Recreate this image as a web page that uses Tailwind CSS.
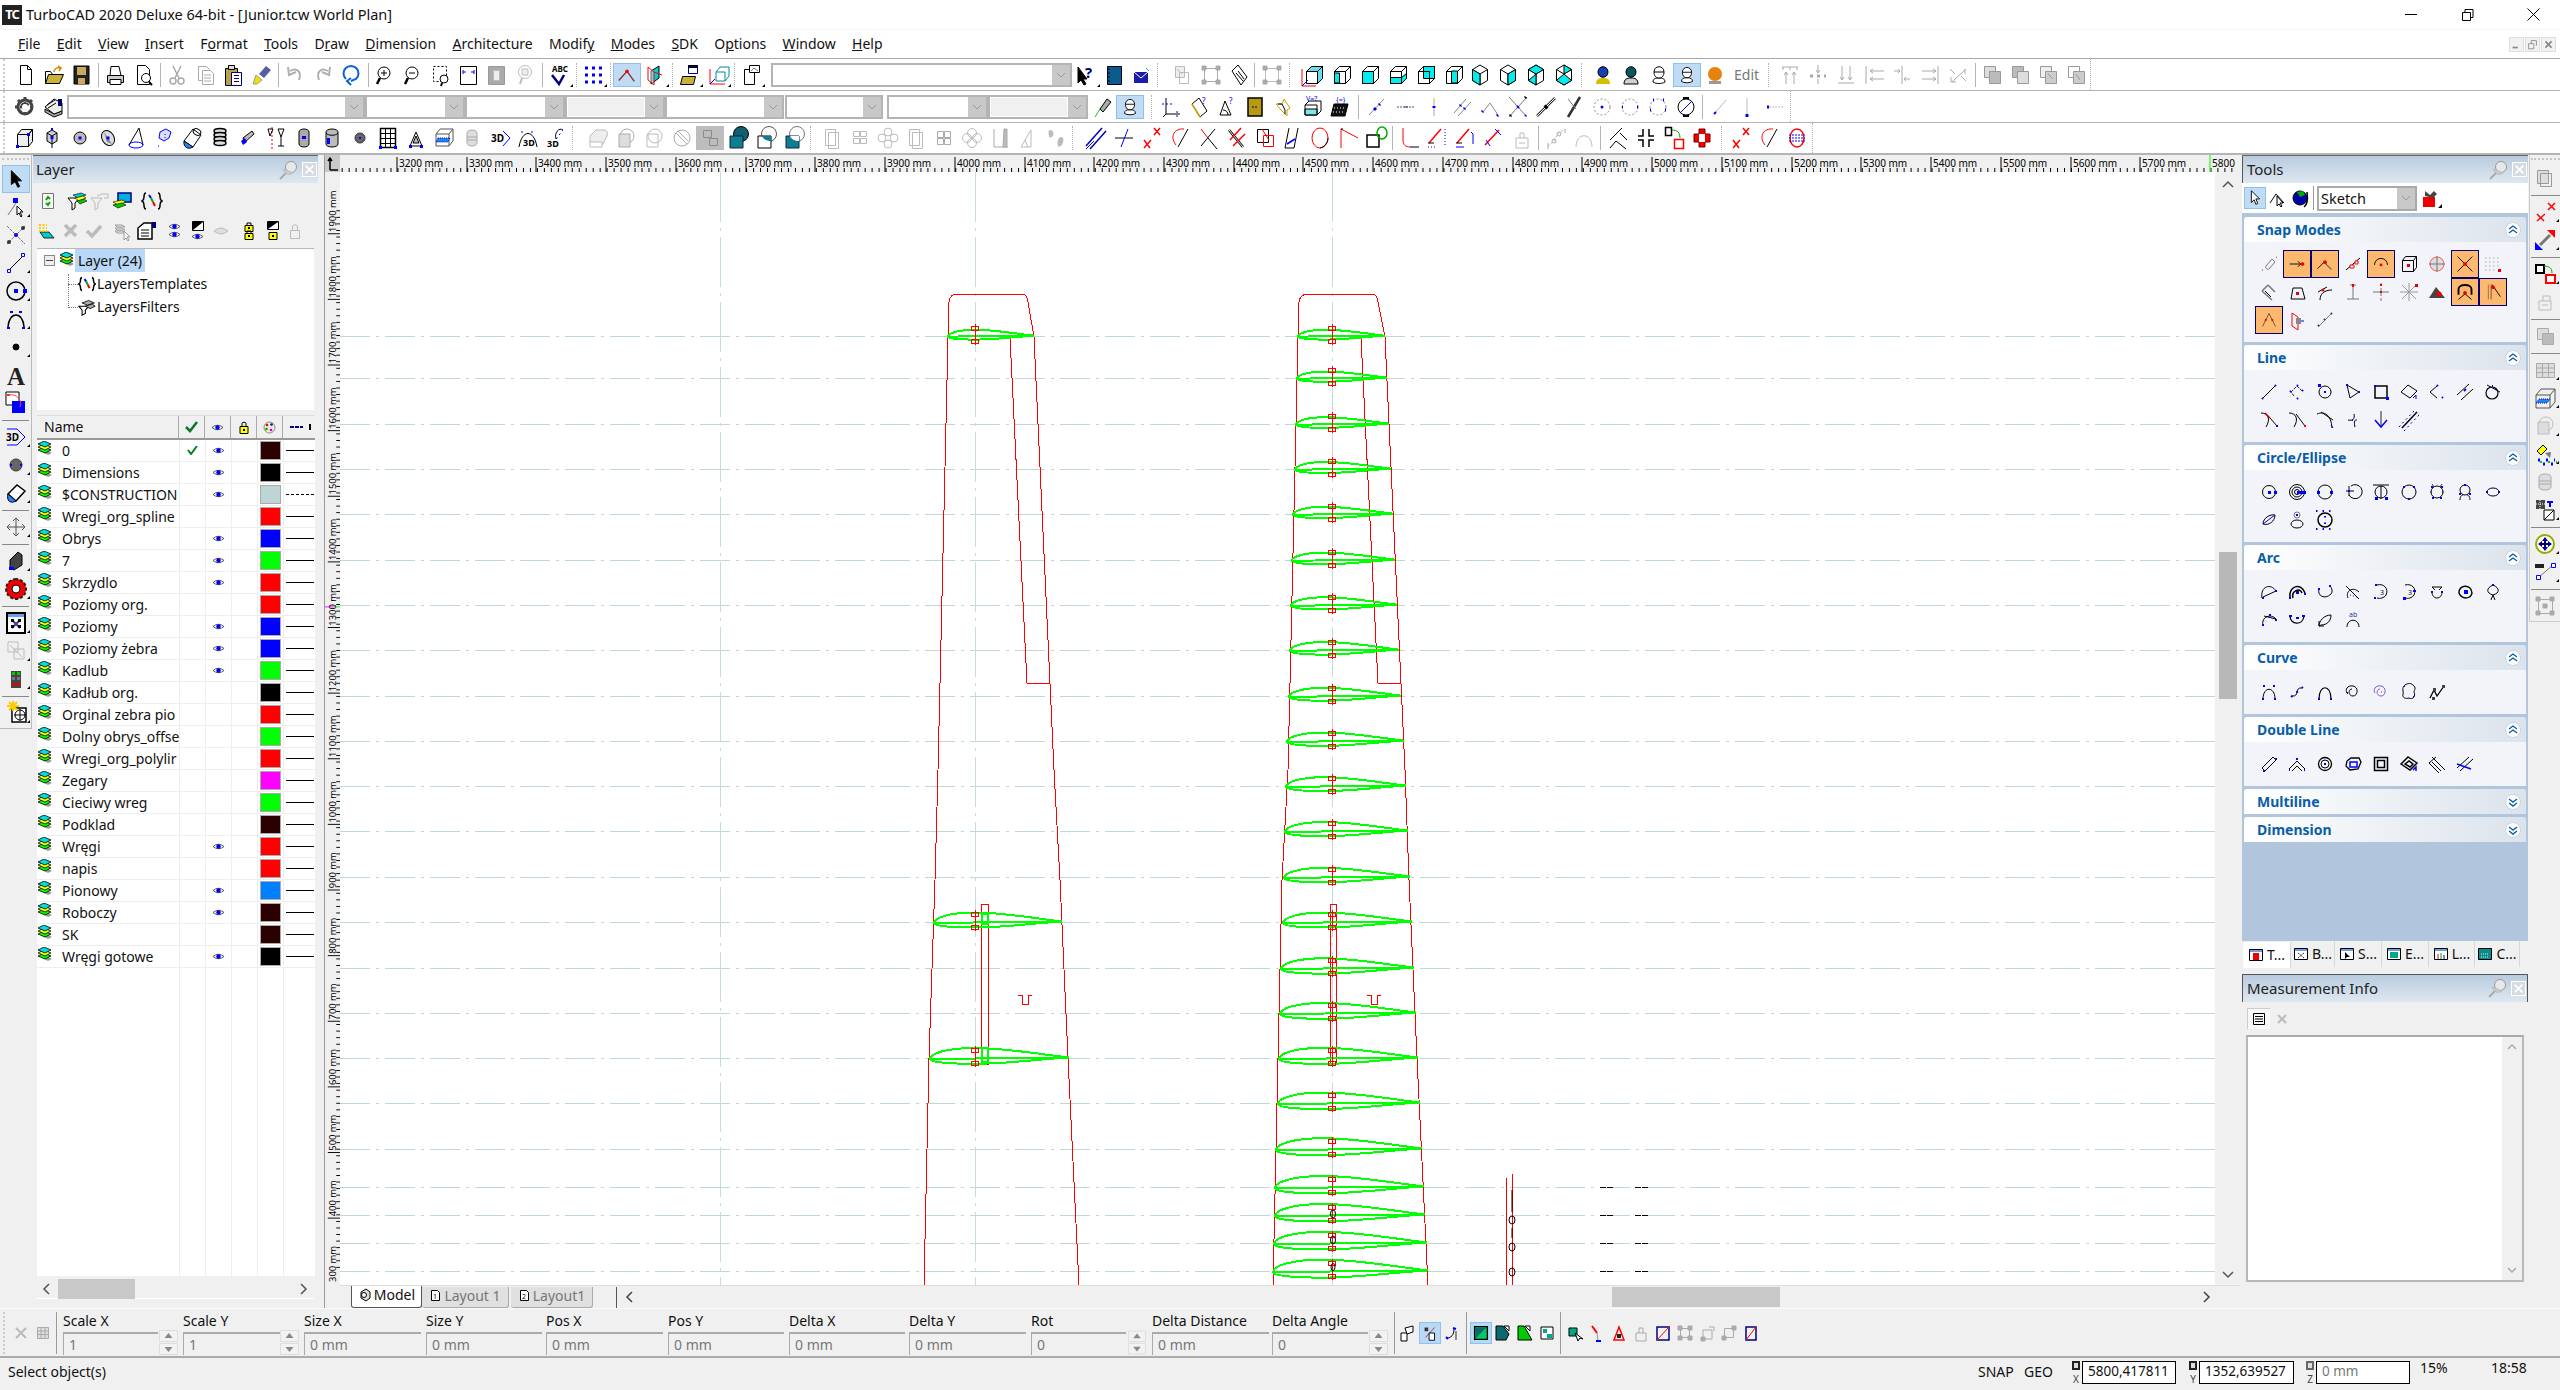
<!DOCTYPE html>
<html lang="en">
<head>
<meta charset="UTF-8" />
<title>TurboCAD 2020 Deluxe 64-bit - [Junior.tcw World Plan]</title>
<script src="https://cdn.jsdelivr.net/npm/@tailwindcss/browser@4"></script>
</head>
<body class="w-[2560px] h-[1390px] overflow-hidden bg-[#f0f0f0] text-[14px] leading-none text-[#111] font-['Noto_Sans',sans-serif] flex flex-col fill-none stroke-black">

<svg class="absolute size-0">
  <defs>
    <g id="stk" stroke="#000" stroke-width=".8"><path fill="#999" stroke="none" d="M3 10l7 4 4-2-7-4z"/><path fill="#0f0" d="M0 9l6-3 7 3-6 3z"/><path fill="#ff0" d="M0 6l6-3 7 3-6 3z"/><path fill="#0dd" d="M0 3l6-3 7 3-6 3z"/></g>
    <g id="eye"><path fill="#fff" stroke="#555" d="M1 4.500q5.500-4.500 11 0q-5.500 4.500-11 0z"/><circle cx="6.500" cy="4.500" r="2.200" fill="#00f" stroke="none"/></g>
    <g id="mag"><circle cx="13" cy="10" r="6" fill="#fff"/><path stroke-width="2.500" d="M9 15l-3 6"/></g>
    <g id="cube"><path fill="#fff" d="M8.500 8.500h11v12h-11zM8.500 8.500l5-5h11l-5 5zM19.500 8.500l5-5v12l-5 5z"/></g>
    <g id="hex"><path fill="#fff" d="M14 2l7.500 4.500v11L14 22l-7.500-4.500v-11z"/><path d="M6.500 6.500L14 11l7.500-4.500M14 11v11"/></g>
    <g id="hd"><path fill="#fff" d="M8 19c0-3 2-4 6-4s6 1 6 4c-3 2-9 2-12 0z"/><path fill="#fff" d="M9 9c0-7 10-7 10 0 0 4-2 6-5 6s-5-2-5-6z"/><path d="M9 9h10"/></g>
    <g id="tri"><path fill="#000" stroke="none" d="M25 24h3v-3z"/></g>
    <g id="foil"><path vector-effect="non-scaling-stroke" d="M0 .1C0-.45.12-1 .32-1C.55-1 .8-.35 1-.05C.75.15.55.58.32.58C.12.58 0 .4 0 .1ZM0 .1L1-.05"/></g>
    <g id="sp" stroke="#f00"><path d="M-3.500-9.500h7v4h-7zM-3.500 3.500h7v4h-7zM0-12V9"/></g>
    <g id="dz"><circle cx="8" cy="8" r="7.500" fill="#fff" stroke="#c9d3de"/><path d="M4 7l4-3 4 3M4 11l4-3 4 3" stroke="#0a5ea8" stroke-width="1.400"/></g>
    <g id="dn"><circle cx="8" cy="8" r="7.500" fill="#fff" stroke="#c9d3de"/><path d="M4 5l4 3 4-3M4 9l4 3 4-3" stroke="#0a5ea8" stroke-width="1.400"/></g>
    <g id="pin"><circle cx="13" cy="7" r="5.500" fill="#e8e8e8" stroke="#999"/><path d="M8 13l-6 6" stroke="#aaa" stroke-width="2"/><path fill="#ccc" stroke="#bbb" d="M5 9q4 8 10 4z"/></g>
    <g id="dd"><path stroke="#999" d="M1 1l4 4 4-4"/></g>
    <pattern id="rt" width="6.973" height="4" patternUnits="userSpaceOnUse"><path stroke="#000" d="M.5 0v4"/></pattern>
    <pattern id="rv" width="4" height="7" patternUnits="userSpaceOnUse"><path stroke="#000" d="M0 .5h4"/></pattern>
  </defs>
</svg>

<!-- title bar -->
<header class="h-[29px] bg-white flex items-center shrink-0">
  <span class="ml-[2px] w-[20px] h-[20px] bg-[#222] text-white text-[13px] font-bold flex items-center justify-center tracking-[-1px]">TC</span>
  <span class="ml-[4px] text-[14.500px]">TurboCAD 2020 Deluxe 64-bit - [Junior.tcw World Plan]</span>
  <div class="ml-auto flex items-center pr-[20px]">
    <i class="w-[12px] h-[1.500px] bg-black"></i>
    <svg class="ml-[45px] w-[12px] h-[12px]" viewBox="0 0 12 12"><path d="M.5 3.500h8v8h-8zM3 3.500V.5h8v8H8.500"/></svg>
    <svg class="ml-[53px] w-[13px] h-[13px]" viewBox="0 0 13 13"><path d="M.5.5l12 12M12.500.5l-12 12"/></svg>
  </div>
</header>

<!-- menu -->
<nav class="h-[30px] bg-white border-b border-t border-t-[#f4f4f4] border-b-[#a8a8a8] flex items-center shrink-0 pl-[18px]">
  <span class="flex gap-[16.300px] text-[14px]">
    <span><u>F</u>ile</span><span><u>E</u>dit</span><span><u>V</u>iew</span><span><u>I</u>nsert</span><span>F<u>o</u>rmat</span><span><u>T</u>ools</span><span>D<u>r</u>aw</span><span><u>D</u>imension</span><span><u>A</u>rchitecture</span><span>Modif<u>y</u></span><span><u>M</u>odes</span><span><u>S</u>DK</span><span>O<u>p</u>tions</span><span><u>W</u>indow</span><span><u>H</u>elp</span>
  </span>
  <div class="ml-auto flex gap-px pr-[4px] [&>svg]:w-[15px] [&>svg]:h-[15px] [&>svg]:bg-[#f2f2f2] [&>svg]:border [&>svg]:border-[#ddd]">
    <svg viewBox="0 0 15 15"><path stroke="#888" stroke-width="2" d="M3 11h6"/></svg>
    <svg viewBox="0 0 15 15"><path stroke="#888" d="M3 6.500h6v6H3zM6 6V3h6v6"/></svg>
    <svg viewBox="0 0 15 15"><path stroke="#888" stroke-width="2" d="M4 4l7 7M11 4l-7 7"/></svg>
  </div>
</nav>

<!-- toolbar 1 -->
<div class="h-[32px] bg-white border-b border-[#b4b4b4] shrink-0 flex items-center">
  <div class="flex items-center ml-[3px] pl-[6px] h-full w-[2088px] border-l-2 border-l-[#ccc] border-dotted border-r border-r-[#b4b4b4] [&>*]:shrink-0 [&>svg]:w-[28px] [&>svg]:h-[24px] [&>i]:w-[6px] [&>i]:h-[24px] [&>i]:border-l [&>i]:border-[#b4b4b4] [&>i]:ml-[3px] [&>i]:mr-[-3px]">
    <svg viewBox="0 0 28 24"><path fill="#fff" d="M9.500 2.500h7l4 4v15h-11zM16.500 2.500v4h4"/></svg>
    <svg viewBox="0 0 28 24"><path fill="#c9b23a" d="M6.500 20.500l3-9h15l-4 9z"/><path d="M6.500 20.500v-12h5l2 3"/><path stroke="#e08000" stroke-width="1.500" d="M15 9c0-3 3-5 6-4M19 3l3 2-2 3"/></svg>
    <svg viewBox="0 0 28 24"><path fill="#222" d="M7 3h15v18H7z"/><path fill="#cba95c" stroke="none" d="M10 4h9v8h-9zM11 15h7v6h-7z"/></svg>
    <i></i>
    <svg viewBox="0 0 28 24"><path fill="#ccc" d="M6.500 12.500h16v7h-16z"/><path fill="#fff" d="M10 3.500h8l2 9H9zM9 16.500h11v5H9z"/></svg>
    <svg viewBox="0 0 28 24"><path fill="#fff" d="M8.500 2.500h8l4 4v15h-12z"/><circle cx="17" cy="15" r="4.500" fill="#fff"/><path d="M20 19l3 3" stroke-width="2"/></svg>
    <i></i>
    <svg viewBox="0 0 28 24"><g stroke="#aaa" stroke-width="1.500"><path d="M10 3l6 12M18 3l-6 12"/><circle cx="10" cy="18" r="3"/><circle cx="18" cy="18" r="3"/></g></svg>
    <svg viewBox="0 0 28 24"><g stroke="#aaa"><path fill="#fff" d="M7.500 3.500h8l3 3v11h-11z"/><path fill="#fff" d="M11.500 7.500h8l3 3v11h-11z"/><path d="M13 12h7M13 15h7M13 18h7"/></g></svg>
    <svg viewBox="0 0 28 24"><path fill="#b9a24a" d="M6.500 5.500h12v17h-12z"/><path fill="#ddd" d="M9.500 2.500h6v4h-6z"/><path fill="#fff" stroke="#00007f" d="M12.500 9.500h10v13h-10z"/><path stroke="#00007f" d="M15 12.500h5M15 15.500h5M15 18.500h5"/></svg>
    <svg viewBox="0 0 28 24"><path fill="#f5e000" stroke="#999" d="M6 21l3-9 6 5-5 4z"/><path fill="#5560a0" stroke="none" d="M12 11l7-8 5 4-7 8z"/></svg>
    <i></i>
    <svg viewBox="0 0 28 24"><path stroke="#b0b0b0" stroke-width="2" d="M9 8c7-4 12 1 9 9M7 4l1 8 7-3"/></svg>
    <svg viewBox="0 0 28 24"><path stroke="#b0b0b0" stroke-width="2" d="M19 8c-7-4-12 1-9 9M21 4l-1 8-7-3"/></svg>
    <svg viewBox="0 0 28 24"><path stroke="#0a5fe0" stroke-width="2" d="M9 16a7.500 7.500 0 1 1 10 0l-5 2M14 22l-4-4 4-3"/></svg>
    <i></i>
    <svg viewBox="0 0 28 24"><use href="#mag"/><path d="M10 10h6M13 7v6"/></svg>
    <svg viewBox="0 0 28 24"><use href="#mag"/><path d="M10 10h6"/></svg>
    <svg viewBox="0 0 28 24"><path stroke-dasharray="2 2" d="M6.500 3.500h13v15h-13z"/><circle cx="17" cy="16" r="4" fill="#fff"/><path stroke-width="2" d="M15 20l-1 3"/></svg>
    <svg viewBox="0 0 28 24"><path fill="#fff" d="M5.500 3.500h16v18h-16z"/><path stroke="#00f" d="M8 9h3M16 9h3M8 7v4M19 7v4"/></svg>
    <svg viewBox="0 0 28 24"><path fill="#aaa" stroke="#999" d="M5.500 3.500h16v18h-16z"/><path fill="#eee" stroke="#bbb" d="M10.500 7.500h6v10h-6z"/></svg>
    <svg viewBox="0 0 28 24" stroke="#bbb"><circle cx="14" cy="9" r="6.500" fill="#fff"/><path fill="#eee" d="M11 6h6v6h-6z"/><path stroke-width="2" d="M11 15l-2 6"/></svg>
    <i></i>
    <svg viewBox="0 0 28 24"><text x="7" y="9" class="text-[8px] font-bold fill-black stroke-none">ABC</text><path stroke="#00007f" stroke-width="2.500" d="M7 12l7 9 5-9"/><use href="#tri"/></svg>
    <i class="border-dotted"></i>
    <svg viewBox="0 0 28 24"><path stroke="#00f" stroke-width="3" stroke-dasharray="3 4" d="M6 5h18M6 12h18M6 19h18"/><use href="#tri"/></svg>
    <i class="border-dotted"></i>
    <svg viewBox="0 0 28 24" class="bg-[#c0dcf5] border border-[#8fc1ea]"><path stroke="#8a3030" stroke-width="1.500" d="M5 18l9-10 8 11"/><circle cx="14" cy="8" r="2" fill="#f00" stroke="none"/></svg>
    <svg viewBox="0 0 28 24"><path fill="#0cc" d="M10 8l8-5v12l-8 6z"/><path stroke="#f00" fill="#fff" fill-opacity=".4" d="M7 4l6 5v13l-6-5z"/><path stroke="#f00" d="M13 9l8 3"/><use href="#tri"/></svg>
    <i class="border-dotted"></i>
    <svg viewBox="0 0 28 24"><path fill="#c9b23a" d="M5.500 21.500l2-8h13l-2 8z"/><path fill="#fff" stroke="#00007f" d="M13.500 2.500h9v8h-9z"/><path fill="#00007f" d="M13.500 2.500h9v2h-9z"/><use href="#tri"/></svg>
    <svg viewBox="0 0 28 24"><path stroke="#089" d="M13 9h9v9h-9zM13 9l4-5h9v9l-4 5"/><path stroke="#f00" d="M7 6v15h15"/><path stroke="#00f" d="M7 21l5-5"/><use href="#tri"/></svg>
    <i class="border-dotted"></i>
    <svg viewBox="0 0 28 24"><path fill="#fff" d="M7.500 6.500h10v15h-10z"/><path fill="#fff" d="M12.500 2.500h10v7h-10z"/><path stroke="#777" d="M14 8l3-3 4 3"/><use href="#tri"/></svg>
    <!-- style combo -->
    <div class="ml-[6px] w-[301px] h-[24px] bg-white border-2 border-[#b4b4b4] flex justify-end"><span class="w-[18px] bg-[#c8c8c8] flex items-center justify-center"><svg class="w-[10px] h-[6px]" viewBox="0 0 10 6"><use href="#dd"/></svg></span></div>
    <svg viewBox="0 0 28 24"><path fill="#000" d="M6 4v16l3-3 3 5 2-1-3-5h4z"/><text x="13" y="15" class="text-[15px] font-bold fill-[#00007f] stroke-none">?</text><use href="#tri"/></svg>
    <svg viewBox="0 0 28 24"><path fill="#0b5c8a" stroke="#002" d="M7.500 3.500h14v18h-14z"/><path stroke="#002" d="M7 6h3M7 10h3M7 14h3M7 18h3"/></svg>
    <svg viewBox="0 0 28 24"><path fill="#1c1ca8" stroke="none" d="M6 9h14v11H6z"/><path stroke="#fff" d="M6 9l7 6 7-6"/><path stroke="#0af" d="M18 5l3 3"/></svg>
    <i class="!w-[13px] !border-dotted !ml-[1px] !mr-[-1px]"></i>
    <svg viewBox="0 0 28 24" stroke="#bbb"><path fill="#eee" d="M6.500 3.500h9v11h-9z"/><path d="M10.500 9.500h9v11h-9z"/><path d="M8 6l5 5"/></svg>
    <svg viewBox="0 0 28 24" stroke="#aaa"><path d="M7.500 5.500h13v13h-13z"/><path fill="#aaa" d="M5 3h4v4H5zM19 3h4v4h-4zM5 17h4v4H5zM19 17h4v4h-4z"/></svg>
    <svg viewBox="0 0 28 24"><path fill="#fff" d="M7 8l6-6 9 12-6 8z"/><path d="M11 10l7 8M13 8l6 8"/></svg>
    <i class="!w-[5px] !ml-[1px] !mr-[-1px]"></i>
    <svg viewBox="0 0 28 24" stroke="#aaa"><path stroke="#bbb" d="M7.500 5.500h13v13h-13z"/><path fill="#aaa" d="M5 3h4v4H5zM19 3h4v4h-4zM5 17h4v4H5zM19 17h4v4h-4z"/></svg>
    <i class="!w-[12px] !border-dotted"></i>
    <svg viewBox="0 0 28 24"><use href="#cube"/><path fill="#0cd" stroke="#000" d="M19.500 8.500l5-5v12l-5 5zM8.500 8.500l5-5h11l-5 5z" fill-opacity=".6"/><path stroke="#f00" d="M4 6v17h14"/><path stroke="#00f" d="M4 23l6-6"/></svg>
    <svg viewBox="0 0 28 24"><use href="#cube"/><path fill="#0ee" d="M8.500 10h5v10h-5z"/></svg>
    <svg viewBox="0 0 28 24"><use href="#cube"/><path fill="#0ee" d="M8.500 8.500h11v12h-11z"/></svg>
    <svg viewBox="0 0 28 24"><use href="#cube"/><path fill="#0ee" d="M8.500 14.500h11v6h-11zM19.500 14.500l5-4v5l-5 5z"/></svg>
    <svg viewBox="0 0 28 24"><use href="#cube"/><path fill="#0ee" d="M13.500 3.500h11v12h-11z"/><path d="M8.500 8.500h11v12h-11z"/></svg>
    <svg viewBox="0 0 28 24"><use href="#cube"/><path fill="#0ee" d="M13.500 8h6v12h-6z"/></svg>
    <svg viewBox="0 0 28 24"><use href="#hex"/><path fill="#0ee" d="M6.500 6.500L14 11v11l-7.500-4.500z"/></svg>
    <svg viewBox="0 0 28 24"><use href="#hex"/><path fill="#0ee" d="M14 11l7.500-4.500v11L14 22z"/></svg>
    <svg viewBox="0 0 28 24"><use href="#hex"/><path fill="#0ee" d="M14 2l7.500 4.500L14 11 6.500 6.500zM14 11v11l-7.500-4.500z"/></svg>
    <svg viewBox="0 0 28 24"><use href="#hex"/><path fill="#0ee" d="M14 11l7.500 6.500-7.500 4.500-7.500-4.500zM14 2l7.500 4.500L14 11z"/></svg>
    <i class="!w-[11px] !border-dotted"></i>
    <svg viewBox="0 0 28 24"><path fill="#d5c000" stroke="none" d="M7 21c0-5 3-6 7-6s7 1 7 6z"/><path fill="#1540b0" d="M9 9c0-7 10-7 10 0s-10 7-10 0z"/></svg>
    <svg viewBox="0 0 28 24"><path fill="#d0d0d0" d="M7 21c0-5 3-6 7-6s7 1 7 6z"/><path fill="#0a5560" d="M9 9c0-7 10-7 10 0s-10 7-10 0z"/></svg>
    <svg viewBox="0 0 28 24"><use href="#hd"/></svg>
    <svg viewBox="0 0 28 24" class="bg-[#c0dcf5] border border-[#8fc1ea]"><use href="#hd"/></svg>
    <svg viewBox="0 0 28 24"><circle cx="14" cy="11" r="7" fill="#e8820c" stroke="none"/><path fill="#999" stroke="none" d="M8 18h12v3H8z"/></svg>
    <span class="w-[36px] text-[#777] text-[14px] pl-[5px]">Edit</span>
    <i class="!w-[11px] !border-dotted"></i>
    <svg viewBox="0 0 28 24" stroke="#aaa"><path d="M6 4h16M7 4v3M14 4v3M21 4v3M10 21V9M18 21V9M8 12l2-3 2 3M16 12l2-3 2 3"/></svg>
    <svg viewBox="0 0 28 24" stroke="#aaa"><path d="M14 2v8M12 7l2 3 2-3M14 21v-5"/><path stroke-width="3" stroke-dasharray="3 4" d="M6 13h16"/></svg>
    <svg viewBox="0 0 28 24" stroke="#aaa"><path d="M10 3v14M18 3v14M8 14l2 3 2-3M16 14l2 3 2-3M6 20h16"/></svg>
    <svg viewBox="0 0 28 24" stroke="#aaa"><path d="M6 3v18M24 8H10M24 16H10M13 6l-3 2 3 2M13 14l-3 2 3 2"/></svg>
    <svg viewBox="0 0 28 24" stroke="#aaa"><path d="M14 3v18M6 8h6M22 16h-6M10 6l2 2-2 2M18 14l-2 2 2 2"/></svg>
    <svg viewBox="0 0 28 24" stroke="#aaa"><path d="M22 3v18M6 8h14M6 16h14M17 6l3 2-3 2M17 14l3 2-3 2"/></svg>
    <svg viewBox="0 0 28 24" stroke="#aaa"><path d="M6 6l5 5M22 6l-14 13M22 18l-5-5M7 14v5h5M21 6v5"/></svg>
    <i></i>
    <svg viewBox="0 0 28 24" stroke="#999"><path fill="#ddd" d="M6.500 3.500h11v11h-11z"/><path fill="#bbb" d="M11.500 8.500h11v12h-11z"/></svg>
    <svg viewBox="0 0 28 24" stroke="#999"><path fill="#bbb" d="M6.500 3.500h11v11h-11z"/><path fill="#ddd" d="M11.500 8.500h11v12h-11z"/></svg>
    <svg viewBox="0 0 28 24" stroke="#999"><path fill="#eee" d="M6.500 3.500h11v11h-11z"/><path fill="#ccc" d="M11.500 8.500h11v12h-11z"/><path d="M14 11l5 5"/></svg>
    <svg viewBox="0 0 28 24" stroke="#999"><path fill="#fff" d="M6.500 3.500h11v11h-11z"/><path fill="#ccc" d="M11.500 8.500h11v12h-11z"/><path d="M14 11l4 6"/></svg>
  </div>
</div>

<!-- toolbar 2 -->
<div class="h-[32px] bg-white border-b border-[#b4b4b4] shrink-0 flex items-center">
  <div class="flex items-center ml-[3px] pl-[6px] h-full w-[1788px] border-l-2 border-l-[#ccc] border-dotted border-r border-r-[#b4b4b4] [&>*]:shrink-0 [&>svg]:w-[28px] [&>svg]:h-[24px] [&>i]:w-[6px] [&>i]:h-[24px] [&>i]:border-l [&>i]:border-[#b4b4b4] [&>i]:border-dotted [&>b]:h-[24px] [&>b]:bg-white [&>b]:border-2 [&>b]:border-[#b4b4b4] [&>b]:flex [&>b]:justify-end [&_b>span:last-child]:w-[18px] [&_b>span:last-child]:bg-[#c8c8c8] [&_b>span:last-child]:flex [&_b>span:last-child]:items-center [&_b>span:last-child]:justify-center [&_b_svg]:w-[10px] [&_b_svg]:h-[6px]">
    <svg viewBox="0 0 28 24"><circle cx="14" cy="12" r="7" fill="none" stroke="#444" stroke-width="3"/><path stroke="#444" stroke-width="3" stroke-dasharray="2.500 2.500" d="M14 2v20M4 12h20M7 5l14 14M21 5L7 19"/><circle cx="14" cy="12" r="3" fill="#fff" stroke="none"/></svg>
    <svg viewBox="0 0 28 24"><path fill="#aaa" d="M6 17l9 5 8-3v-3l-8 3-9-5z"/><path fill="#eee" d="M6 12l9-8 8 4v8l-8 3z"/><path fill="#006" stroke="none" d="M19 4h4v7h-4z"/><path d="M8 10l8-5M9 13l8-5"/></svg>
    <b class="w-[298px]"><span><svg viewBox="0 0 10 6"><use href="#dd"/></svg></span></b>
    <b class="w-[100px]"><span><svg viewBox="0 0 10 6"><use href="#dd"/></svg></span></b>
    <b class="w-[100px]"><span><svg viewBox="0 0 10 6"><use href="#dd"/></svg></span></b>
    <b class="w-[100px]"><span class="flex-1 bg-[#f0f0f0] m-px"></span><span><svg viewBox="0 0 10 6"><use href="#dd"/></svg></span></b>
    <b class="w-[119px]"><span><svg viewBox="0 0 10 6"><use href="#dd"/></svg></span></b>
    <b class="w-[98px] ml-px"><span><svg viewBox="0 0 10 6"><use href="#dd"/></svg></span></b>
    <b class="w-[101px] ml-[4px]"><span><svg viewBox="0 0 10 6"><use href="#dd"/></svg></span></b>
    <b class="w-[100px]"><span class="flex-1 bg-[#f0f0f0] m-px"></span><span><svg viewBox="0 0 10 6"><use href="#dd"/></svg></span></b>
    <svg viewBox="0 0 28 24"><path stroke="#0c0" d="M7 22l5-8"/><path fill="#aaa" d="M12 14l7-10 4 3-8 10z"/></svg>
    <svg viewBox="0 0 28 24" class="bg-[#c0dcf5] border border-[#8fc1ea]"><use href="#hd"/></svg>
    <i class="!w-[13px] ml-[7px] mr-[-7px]"></i>
    <svg viewBox="0 0 28 24"><path d="M9 3v16h14M9 19l-3 3"/><path stroke="#00f" stroke-dasharray="2 2" d="M5 9h12M20 22v-6"/></svg>
    <svg viewBox="0 0 28 24"><path d="M7 9l7-6 8 13-7 6z"/><path stroke="#c8a000" stroke-width="1.500" d="M7 9l8 13"/><text x="17" y="9" class="text-[8px] fill-[#00f] stroke-none">?</text></svg>
    <svg viewBox="0 0 28 24"><path d="M7 20l5-14 6 14zM10 15c3 0 5 2 5 5"/><text x="16" y="9" class="text-[8px] fill-[#00f] stroke-none">?</text></svg>
    <svg viewBox="0 0 28 24"><path fill="#b89a10" stroke-width="1.500" d="M7 3h14v18H7z"/><path stroke="#00007f" stroke-dasharray="2 1" d="M11 12h6"/></svg>
    <svg viewBox="0 0 28 24"><path stroke="#c8a000" d="M7 9h6l2-5 6 9-3 2v6l-6-6z"/><path stroke="#000" d="M9 9h4l3 6v4"/></svg>
    <svg viewBox="0 0 28 24"><path d="M8 10h12v10H8zM8 10l4-4h12v10l-4 4"/><path fill="#0cc" fill-opacity=".5" d="M8 14h12v6H8z"/><text x="9" y="6" class="text-[7px] fill-[#00f] stroke-none">V=?</text></svg>
    <svg viewBox="0 0 28 24"><path fill="#111" d="M9 9h14l-3 12H6z"/><path stroke="#fff" stroke-dasharray="1 2" d="M9 13h12M8 17h12"/><text x="11" y="7" class="text-[7px] fill-[#00f] stroke-none">{=}</text></svg>
    <i class="!w-[11px] !border-solid ml-[5px] mr-[-5px]"></i>
    <svg viewBox="0 0 28 24"><path stroke="#888" d="M5 20L20 4"/><path stroke="#00f" stroke-width="3" d="M10 15l2-2M15 10l1-1"/></svg>
    <svg viewBox="0 0 28 24"><path stroke="#aaa" stroke-dasharray="2 1" stroke-width="2" d="M5 12h18"/><path stroke="#3a3a90" d="M12 12h4"/></svg>
    <svg viewBox="0 0 28 24"><path stroke="#aaa" d="M14 3v18"/><path stroke="#00f" stroke-width="3" d="M14 11v2"/></svg>
    <svg viewBox="0 0 28 24"><path stroke="#888" d="M6 18L18 4M10 21L23 7"/><path stroke="#00f" stroke-width="3" d="M12 11l1-1M16 14l1-1"/></svg>
    <svg viewBox="0 0 28 24"><path stroke="#888" d="M7 17L14 8l8 12"/><path stroke="#00f" stroke-width="3" d="M6 17l1-1M21 21l1-1"/></svg>
    <svg viewBox="0 0 28 24"><path stroke="#777" d="M5 22L23 2M5 2l18 20"/><path stroke-width="3" d="M6 21l1-1M21 3l1-1"/><path stroke="#00f" stroke-width="2" d="M21 20l1 1M13 11l2 2"/></svg>
    <svg viewBox="0 0 28 24"><path stroke="#333" stroke-width="2.500" d="M5 21L23 3"/><path stroke="#fff" d="M5 21L23 3"/><path stroke-width="4" d="M13 13l2-2"/></svg>
    <svg viewBox="0 0 28 24"><path stroke="#333" stroke-width="2.500" d="M8 22l12-20"/><path stroke="#777" d="M8 4l8 10"/></svg>
    <svg viewBox="0 0 28 24"><circle cx="14" cy="12" r="8" stroke="#888" stroke-dasharray="2 2"/><circle cx="14" cy="12" r="1.500" fill="#00f" stroke="none"/></svg>
    <svg viewBox="0 0 28 24"><circle cx="14" cy="12" r="8" stroke="#888" stroke-dasharray="2 2"/><path stroke="#00f" stroke-width="3" d="M6 12h1M21 12h1"/></svg>
    <svg viewBox="0 0 28 24"><circle cx="14" cy="12" r="8" stroke="#888" stroke-dasharray="2 2"/><path stroke="#00f" stroke-width="3" d="M9 5h1M19 5h1M6 15h1M21 15h1"/></svg>
    <svg viewBox="0 0 28 24"><circle cx="14" cy="12" r="8"/><path stroke="#00f" d="M8 18L20 6"/><path stroke-width="2" d="M11 3h6M11 21h6"/></svg>
    <i class="!border-solid ml-[2px] mr-[-2px] !w-[5px]"></i>
    <svg viewBox="0 0 28 24"><path stroke="#bbb" d="M21 5L10 18"/><path stroke="#00f" stroke-width="2" d="M9 19l2-2"/></svg>
    <svg viewBox="0 0 28 24"><path stroke="#bbb" d="M14 3v17"/><path stroke="#00f" stroke-width="3" d="M14 19v3"/></svg>
    <svg viewBox="0 0 28 24"><path stroke="#bbb" stroke-dasharray="2 1" d="M8 12h14"/><path stroke="#00f" stroke-width="3" d="M6 12h2"/></svg>
  </div>
</div>

<!-- toolbar 3 -->
<div class="h-[32px] bg-white border-b-2 border-[#b4b4b4] shrink-0 flex items-center">
  <div class="flex items-center ml-[3px] pl-[5px] h-full w-[1810px] border-l-2 border-l-[#ccc] border-dotted border-r border-r-[#b4b4b4] [&>*]:shrink-0 [&>svg]:w-[28px] [&>svg]:h-[24px] [&>i]:w-[6px] [&>i]:h-[24px] [&>i]:border-l [&>i]:border-[#b4b4b4]">
    <svg viewBox="0 0 28 24"><path fill="#eee" d="M7.500 8.500h11v12h-11zM7.500 8.500l4-5h11l-4 5zM18.500 8.500l4-5v12l-4 5z"/><path fill="#00f" stroke="none" d="M6 19h3v3H6zM17 7h3v3h-3z"/></svg>
    <svg viewBox="0 0 28 24"><path fill="#ccc" d="M9 7l5-3 5 3v8l-5 3-5-3z"/><path d="M9 7l5 3 5-3M14 10v8M14 18v4"/><path fill="#00f" stroke="none" d="M13 2h2v2h-2zM12.500 10h3v3h-3z"/></svg>
    <svg viewBox="0 0 28 24"><circle cx="14" cy="12" r="6" fill="#bbb"/><path fill="#00f" stroke="none" d="M12.500 10.500h3v3h-3z"/></svg>
    <svg viewBox="0 0 28 24"><ellipse cx="14" cy="12" rx="6" ry="8" fill="#ddd" transform="rotate(-30 14 12)"/><path fill="#888" stroke="none" d="M10 6l8 12-5-2z"/><path fill="#00f" stroke="none" d="M12.500 10.500h3v3h-3z"/></svg>
    <svg viewBox="0 0 28 24"><path d="M7 19L17 2l4 17"/><ellipse cx="14" cy="19" rx="7" ry="3" stroke="#00f"/></svg>
    <svg viewBox="0 0 28 24"><path stroke="#00f" fill="#ddf" d="M10 6l6-3 5 3-2 6-5 3-5-3z"/><path stroke="#00f" stroke-dasharray="1 2" d="M8 20h3M15 8v6"/></svg>
    <svg viewBox="0 0 28 24"><path d="M6 15l9-12 8 6-8 12z"/><path fill="#28f" d="M6 15l9 6c-5 3-10 0-9-6z"/><ellipse cx="19" cy="6" rx="4" ry="3" transform="rotate(30 19 6)"/></svg>
    <svg viewBox="0 0 28 24"><g stroke-width="1.500" fill="#ddd"><ellipse cx="14" cy="5" rx="6" ry="2.500"/><ellipse cx="14" cy="9" rx="6" ry="2.500"/><ellipse cx="14" cy="13" rx="6" ry="2.500"/><ellipse cx="14" cy="17" rx="6" ry="2.500"/></g></svg>
    <svg viewBox="0 0 28 24"><path fill="#bbb" d="M9 12l9-7 2 3-9 8z"/><path fill="#00f" stroke="none" d="M7 15l4-3 2 4-4 3z"/></svg>
    <svg viewBox="0 0 28 24"><path stroke="#f00" stroke-dasharray="2 2" d="M10 1v22"/><path d="M16 3l6 0 -3 8zM19 11v9M16 20h6M6 3l5 0 -3 7z"/></svg>
    <svg viewBox="0 0 28 24"><path fill="#aaa" d="M9 6c0-4 10-4 10 0v12c0 4-10 4-10 0z"/><path fill="#00f" stroke="none" d="M12 10h4v3h-4z"/></svg>
    <svg viewBox="0 0 28 24"><path fill="#bbb" d="M8 6c0-4 12-4 12 0v12c0 4-12 4-12 0z"/><path fill="#00f" stroke="none" d="M9 12h3v6H9z"/><path d="M8 7c2 3 10 3 12 0"/></svg>
    <svg viewBox="0 0 28 24"><circle cx="14" cy="12" r="5" fill="#666" stroke="#333"/><path fill="#00f" stroke="none" d="M13 11h2v2h-2z"/></svg>
    <svg viewBox="0 0 28 24"><path d="M6.500 2.500h15v19h-15z" stroke-width="1.500"/><path d="M6.500 7.500h15M6.500 12.500h15M6.500 17.500h15M11.500 2.500v19M16.500 2.500v19"/><path fill="#00f" stroke="none" d="M5 20h3v3H5zM20 20h3v3h-3z"/></svg>
    <svg viewBox="0 0 28 24"><path d="M8 20L14 6l6 14z"/><path fill="#bbb" d="M11 17l3-7 3 7z"/><path fill="#00f" stroke="none" d="M7 19h3v3H7zM18 19h3v3h-3z"/></svg>
    <svg viewBox="0 0 28 24"><path stroke="#555" d="M6 8l4-5h13v12l-4 5H6zM6 8h13v12M19 8l4-5"/><path fill="#28d" stroke="#00f" stroke-dasharray="1 1" d="M8 12h12l-2 4H6z"/></svg>
    <svg viewBox="0 0 28 24" stroke="#aaa"><path fill="#ddd" d="M9 7c0-4 10-4 10 0v10c0 4-10 4-10 0z"/><path d="M9 11h10M9 14h10"/></svg>
    <svg viewBox="0 0 28 24"><text x="5" y="16" class="text-[10px] font-bold fill-black stroke-none">3D</text><path stroke="#00f" d="M17 5l7 7-7 8"/></svg>
    <svg viewBox="0 0 28 24"><path d="M5 21C8 3 20 3 23 21"/><text x="9" y="20" class="text-[9px] font-bold fill-black stroke-none">3D</text><path stroke="#00f" stroke-dasharray="2 8" d="M7 6h14"/></svg>
    <svg viewBox="0 0 28 24"><text x="5" y="21" class="text-[9px] font-bold fill-black stroke-none">3D</text><path d="M14 13c-2-6 3-12 7-9"/><path stroke="#00f" stroke-dasharray="2 3" d="M14 13l7-9"/></svg>
    <i class="!w-[14px] !border-dotted ml-[2px] mr-[-2px]"></i>
    <svg viewBox="0 0 28 24" stroke="#bbb"><path fill="#eee" d="M6 10l6-6h8c3 0 4 3 3 6l-4 8H9l-3-2z"/><path d="M6 16h12v5H6z" fill="#fff"/></svg>
    <svg viewBox="0 0 28 24" stroke="#aaa"><circle cx="15" cy="10" r="7"/><path fill="#ddd" d="M7 8h11v13H7z"/></svg>
    <svg viewBox="0 0 28 24" stroke="#bbb"><circle cx="15" cy="10" r="7"/><path d="M7 8h11v13H7z"/></svg>
    <svg viewBox="0 0 28 24" stroke="#aaa"><circle cx="14" cy="12" r="8"/><path d="M8 7l11 11M10 5l10 10"/></svg>
    <svg viewBox="0 0 28 24" class="bg-[#bdbdbd]" stroke="#8a8a8a"><path d="M7.500 4.500h8v7h-8zM13.500 12.500h8v7h-8z"/></svg>
    <svg viewBox="0 0 28 24"><circle cx="17" cy="8" r="7.500" fill="#125f70"/><path fill="#0e7f90" stroke="#124" d="M6 10h13v12H6z"/></svg>
    <svg viewBox="0 0 28 24"><circle cx="17" cy="8" r="7.500" fill="#fff" stroke="#555"/><path fill="#fff" d="M6 10h13v12H6z"/><path fill="#0e7f90" stroke="none" d="M10 10h9v5c-4 0-8-2-9-5z"/></svg>
    <svg viewBox="0 0 28 24"><circle cx="17" cy="8" r="7.500" fill="#fff" stroke="#777"/><path fill="#0e7f90" stroke="#124" d="M6 10h13v12H6z"/><path fill="#fff" stroke="none" d="M10 10h9v5c-4 0-8-2-9-5z"/></svg>
    <i class="!border-dotted ml-[2px] mr-[-2px] !w-[10px]"></i>
    <svg viewBox="0 0 28 24" stroke="#bbb"><path d="M7.500 3.500h10v16h-10zM10.500 6.500h10v16h-10z"/></svg>
    <svg viewBox="0 0 28 24" stroke="#bbb"><path d="M7.500 5.500h6v5h-6zM14.500 5.500h6v5h-6zM7.500 12.500h6v5h-6zM14.500 12.500h6v5h-6z"/></svg>
    <svg viewBox="0 0 28 24" stroke="#bbb"><circle cx="14" cy="6" r="4"/><circle cx="14" cy="18" r="4"/><circle cx="8" cy="12" r="4"/><circle cx="20" cy="12" r="4"/></svg>
    <svg viewBox="0 0 28 24" stroke="#bbb"><path d="M7.500 3.500h10v16h-10zM10.500 6.500h10v16h-10z"/></svg>
    <svg viewBox="0 0 28 24" stroke="#aaa"><path d="M7.500 5.500h6v6h-6zM14.500 5.500h6v6h-6zM7.500 12.500h6v6h-6zM14.500 12.500h6v6h-6z"/></svg>
    <svg viewBox="0 0 28 24" stroke="#bbb"><circle cx="14" cy="7" r="4.500"/><circle cx="14" cy="17" r="4.500"/><circle cx="9" cy="12" r="4.500"/><circle cx="19" cy="12" r="4.500"/></svg>
    <svg viewBox="0 0 28 24" stroke="#aaa"><path d="M8 3v18h14"/><path fill="#bbb" d="M18 3h3v18h-4z"/></svg>
    <svg viewBox="0 0 28 24" stroke="#bbb"><path d="M7 21L17 4v17zM11 14l3 7"/></svg>
    <svg viewBox="0 0 28 24"><path fill="#bbb" stroke="none" d="M8 4c3 0 4 3 3 6l-3 2c-2-3-2-8 0-8zM19 11c3 0 3 4 1 8l-3 2c-3-3-1-10 2-10z"/></svg>
    <i class="!w-[12px] !border-dotted ml-[2px] mr-[-2px]"></i>
    <svg viewBox="0 0 28 24"><path stroke="#00b" stroke-width="1.500" d="M4 20L20 2M8 23L24 5"/><path stroke="#00f" d="M4 23l8-8"/></svg>
    <svg viewBox="0 0 28 24"><path d="M5 12h18"/><path stroke="#00f" d="M18 3l-7 18"/></svg>
    <svg viewBox="0 0 28 24"><path stroke="#f00" stroke-width="1.500" d="M6 14l6 8M13 14l-7 8M16 9l6-7M16 2l6 7"/></svg>
    <svg viewBox="0 0 28 24"><path stroke="#f00" d="M10 19C3 10 9 2 18 3"/><path d="M22 3L12 21"/></svg>
    <svg viewBox="0 0 28 24"><path stroke="#f00" d="M7 3l7 9"/><path d="M14 12l9 11M7 20L21 3"/></svg>
    <svg viewBox="0 0 28 24"><path stroke-width="2.500" d="M7 4l14 17"/><path stroke="#fff" d="M7 4l14 17"/><path stroke="#f00" stroke-width="1.500" d="M8 14L19 2M11 20L23 8"/></svg>
    <svg viewBox="0 0 28 24"><path fill="#fff" d="M7.500 3.500h11v13h-11z"/><path stroke="#f00" d="M13.500 9.500h10v11h-10zM12 3l7 11"/></svg>
    <svg viewBox="0 0 28 24"><path d="M7 22L11 2M20 2l-4 20H7"/><path stroke="#00f" stroke-width="1.500" d="M9 18l8-5"/></svg>
    <svg viewBox="0 0 28 24"><ellipse cx="14" cy="12" rx="8" ry="10" stroke="#f00"/><path d="M14 22c4-1 8-5 8-10"/></svg>
    <svg viewBox="0 0 28 24"><path stroke="#f00" d="M7 22V3l17 9"/><path d="M7 3h2"/></svg>
    <svg viewBox="0 0 28 24"><path fill="#fff" stroke-width="1.500" d="M5 9h12v12H5z"/><ellipse cx="20" cy="7" rx="5" ry="6" stroke="#0a0" stroke-width="1.500"/></svg>
    <i class="!border-solid ml-[2px] mr-[-2px]"></i>
    <svg viewBox="0 0 28 24"><path stroke="#f00" d="M7 2v12c0 5 3 7 7 7"/><path d="M14 21h9"/></svg>
    <svg viewBox="0 0 28 24"><path stroke="#f00" stroke-width="1.500" d="M5 17L17 3"/><path stroke="#00f" stroke-dasharray="1 2" d="M21 3v18M4 21h8"/><path d="M4 17h6"/></svg>
    <svg viewBox="0 0 28 24"><path stroke="#f00" stroke-width="1.500" d="M5 17L17 3"/><path stroke="#00f" d="M21 8l-2-2M4 21h8M21 8v10"/><path d="M4 17h6"/></svg>
    <svg viewBox="0 0 28 24"><path stroke="#f00" stroke-width="1.500" d="M5 19L19 4"/><path stroke="#00f" d="M6 14l4 6M15 3l6 6"/></svg>
    <svg viewBox="0 0 28 24" stroke="#bbb"><path d="M8 12h12v10H8zM12 12V7h4v5M11 17h6"/></svg>
    <i class="!border-solid ml-[2px] mr-[-2px]"></i>
    <svg viewBox="0 0 28 24" stroke="#aaa"><path d="M6 20l6-5 4-8 7-4" stroke-dasharray="2 2"/><circle cx="12" cy="15" r="2"/><circle cx="17" cy="8" r="2"/><path d="M6 17v6M23 3v4"/></svg>
    <svg viewBox="0 0 28 24" stroke="#bbb"><path d="M6 21C6 6 22 6 22 21"/></svg>
    <i class="!border-solid ml-[2px] mr-[-2px]"></i>
    <svg viewBox="0 0 28 24"><path d="M6 14L18 2M12 15l10 8M6 22l6-7M16 7l7 7"/></svg>
    <svg viewBox="0 0 28 24"><path stroke-width="1.500" d="M11 3v7H6M17 3v7h5M11 21v-7H6M17 21v-7h5"/></svg>
    <svg viewBox="0 0 28 24"><path fill="#fff" stroke-width="1.500" d="M5.500 1.500h6v8h-6z"/><path stroke="#0a0" d="M12 4c5 0 8 2 8 8"/><path fill="#fff" stroke="#f00" stroke-width="1.500" d="M14.500 13.500h9v9h-9z"/></svg>
    <svg viewBox="0 0 28 24"><path fill="#e00" stroke="#700" d="M11 3h6v5h5v8h-5v5h-6v-5H6V8h5z"/><path fill="#fff" stroke="none" d="M11 8h6v8h-6z"/></svg>
    <i class="!w-[11px] !border-dotted ml-[5px] mr-[-5px]"></i>
    <svg viewBox="0 0 28 24"><path stroke="#f00" stroke-width="1.500" d="M6 14l6 8M13 14l-7 8M16 9l6-7M16 2l6 7"/></svg>
    <svg viewBox="0 0 28 24"><path stroke="#f00" d="M10 19C3 10 9 2 18 3"/><path d="M22 3L12 21"/></svg>
    <svg viewBox="0 0 28 24"><ellipse cx="14" cy="12" rx="7" ry="9" stroke="#f00" stroke-width="1.500"/><path stroke="#00f" stroke-dasharray="2 1" d="M6 9h16M6 12h16M6 15h16"/></svg>
  </div>
</div>

<!-- main area -->
<div class="flex h-[1153px] shrink-0 overflow-hidden">

  <!-- left tools -->
  <div class="w-[32px] h-[574px] border-r border-b border-[#bbb] pt-[3px] px-[2px] shrink-0 flex flex-col [&>svg]:size-[28px] [&>svg]:shrink-0 [&>i]:h-[6px] [&>i]:flex [&>i]:items-center [&>i]:after:block [&>i]:after:w-full [&>i]:after:h-px [&>i]:after:bg-[#888]">
    <b class="h-0 border-t-2 border-dotted border-[#c4c4c4] mb-[5px]"></b>
    <svg viewBox="0 0 28 28" class="bg-[#c0dcf5] border border-[#8fc1ea]"><path fill="#000" d="M9 5v15l4-3 3 6 2-1-3-6h5z"/></svg>
    <svg viewBox="0 0 28 28"><path stroke="#777" d="M6 22l8-12"/><path fill="#00f" stroke="none" d="M11 5h5v5h-5z"/><path fill="#fff" d="M15 13v9l2-2 2 4 1-1-2-4h3z"/><use href="#tri"/></svg>
    <svg viewBox="0 0 28 28"><path stroke="#777" stroke-dasharray="3 1" d="M5 5l18 18M23 5L5 23"/><circle cx="14" cy="14" r="2" fill="#00f" stroke="none"/><circle cx="7" cy="21" r="2" fill="#333" stroke="none"/><circle cx="21" cy="7" r="2" fill="#333" stroke="none"/></svg>
    <svg viewBox="0 0 28 28"><path d="M7 21L21 7"/><path stroke="#00f" d="M5.500 20.500h3v3h-3zM19.500 4.500h3v3h-3z"/><use href="#tri"/></svg>
    <svg viewBox="0 0 28 28"><circle cx="14" cy="14" r="9" stroke-width="1.500"/><path fill="#00f" stroke="none" d="M12 12h4v4h-4zM21 12h4v4h-4z"/><use href="#tri"/></svg>
    <svg viewBox="0 0 28 28"><path stroke-width="1.500" d="M6 22C7 6 21 6 22 22"/><path fill="#00f" stroke="none" d="M5 22h3v2H5zM20 22h3v2h-3zM8 6h3v2H8zM17 6h3v2h-3z"/><use href="#tri"/></svg>
    <svg viewBox="0 0 28 28"><circle cx="14" cy="14" r="3" fill="#000"/><use href="#tri"/></svg>
    <svg viewBox="0 0 28 28"><text x="5" y="24" class="text-[25px] font-bold fill-[#222] stroke-none font-['Liberation_Serif',serif]">A</text></svg>
    <svg viewBox="0 0 28 28"><path fill="#fff" d="M4 3h13v13H4z"/><path fill="#00f" stroke="none" d="M10 12h13v12H10z"/><path stroke="#f44" d="M6 6c9-2 15 6 12 12"/><path fill="#f33" stroke="none" d="M5 5h3v2H5z"/></svg>
    <i></i>
    <svg viewBox="0 0 28 28"><text x="4" y="18" class="text-[10px] font-bold fill-black stroke-none">3D</text><path stroke="#00f" d="M15 6l8 8-8 8M5 22h10M5 6h10"/><use href="#tri"/></svg>
    <svg viewBox="0 0 28 28"><circle cx="14" cy="14" r="6" fill="#666" stroke="#333"/><path stroke="#00f" stroke-width="2" d="M8 14h2M18 14h2"/><use href="#tri"/></svg>
    <svg viewBox="0 0 28 28"><path fill="#fff" stroke-width="1.500" d="M6 15l9-9 8 6-9 10z"/><path fill="#28f" d="M6 15l8 7c-5 3-10 0-8-7z"/><use href="#tri"/></svg>
    <i></i>
    <svg viewBox="0 0 28 28"><path stroke="#555" d="M14 5v18M5 14h18M11 8l3-3 3 3M11 20l3 3 3-3M8 11l-3 3 3 3M20 11l3 3-3 3"/><use href="#tri"/></svg>
    <i></i>
    <svg viewBox="0 0 28 28"><path fill="#444" d="M8 13l8-8 4 3v10l-8 5-4-2z"/><path fill="#00f" stroke="none" d="M7 20h5v3H7z"/><use href="#tri"/></svg>
    <svg viewBox="0 0 28 28"><path fill="#e00" stroke="#222" stroke-width="2" stroke-dasharray="3 2" d="M14 4a10 10 0 1 0 .1 0z"/><circle cx="14" cy="14" r="4" fill="#fff" stroke="#000"/><use href="#tri"/></svg>
    <i></i>
    <svg viewBox="0 0 28 28"><path fill="#fff" stroke-width="2" d="M5 4h18v20H5z"/><path fill="#6aa0e8" stroke="none" d="M6 5h16v3H6z"/><path stroke="#3a3a90" stroke-width="2" d="M10 11l8 8M18 11l-8 8"/><path fill="#000" stroke="none" d="M9 10h3v3H9zM16 10h3v3h-3zM9 16h3v3H9zM16 16h3v3h-3z"/><use href="#tri"/></svg>
    <svg viewBox="0 0 28 28" stroke="#bbb"><path d="M6 5h10v10H6zM12 12h10v10H12z"/><path d="M8 8l12 12"/><use href="#tri"/></svg>
    <svg viewBox="0 0 28 28"><path fill="#444" stroke="none" d="M9 6h10v17H9z"/><path fill="#0c0" stroke="none" d="M10 7h3v3h-3zM15 7h3v3h-3z"/><path fill="#777" stroke="none" d="M10 12h3v3h-3zM15 12h3v3h-3z"/><path fill="#e00" stroke="none" d="M10 18h3v3h-3zM15 18h3v3h-3z"/><use href="#tri"/></svg>
    <i></i>
    <svg viewBox="0 0 28 28"><path fill="#fff" stroke-width="1.500" d="M10 9h14v14H10z"/><circle cx="18" cy="16" r="5"/><path d="M18 10v12M12 16h12"/><path stroke="#fc0" stroke-width="2" d="M11 2v10M5 7h12M7 3l8 8M15 3l-8 8"/><use href="#tri"/></svg>
  </div>

  <!-- layer panel -->
  <aside class="w-[285px] ml-px border-t border-[#666] shrink-0 flex flex-col">
    <div class="h-[27px] bg-linear-to-b from-[#b8cbde] to-[#dfe8f1] flex items-center pl-[3px] shrink-0">
      <span class="text-[15px] text-[#222]">Layer</span>
      <svg class="ml-auto w-[20px] h-[20px]" viewBox="0 0 20 20"><use href="#pin"/></svg>
      <svg class="ml-[4px] mr-px w-[15px] h-[15px] bg-[#d6dbe0] border border-white" viewBox="0 0 15 15"><path stroke="#fff" stroke-width="2" d="M3 3l9 9M12 3l-9 9"/></svg>
    </div>
    <div class="h-[30px] flex items-center pl-[4px] mt-[3px] shrink-0 [&>svg]:w-[22px] [&>svg]:h-[22px]">
      <svg viewBox="0 0 22 22"><path fill="#f8f8f8" stroke="#777" d="M5.500 3.500h11v15h-11z"/><path stroke="#0a0" stroke-width="2" d="M9 10l2-3 2 2M13 12l-2 3-2-2"/></svg>
      <svg viewBox="0 0 22 22" class="ml-[7px]"><path fill="#fff" d="M2 8h11l-4 5v5l-3 2v-7z"/><path fill="#0cc" stroke-width=".6" d="M7 5l8-2 5 2-8 3z"/><path fill="#ff0" stroke-width=".6" d="M9 8l8-2 3 2-7 3z"/><path fill="#0c0" stroke-width=".6" d="M11 11l7-2 3 2-7 3z"/></svg>
      <svg viewBox="0 0 22 22" class="ml-px" stroke="#bbb"><path d="M2 8h11l-4 5v5l-3 2v-7zM8 6l5-2h6v4h-4"/></svg>
      <svg viewBox="0 0 22 22"><path fill="#00b0e0" stroke="#00007f" stroke-width="1.500" d="M7 3h13v9H7z"/><path fill="#ff0" stroke-width=".6" d="M2 12l9-2 4 2-8 3z"/><path fill="#0c0" stroke-width=".6" d="M2 15l9-2 4 2-8 3z"/></svg>
      <svg viewBox="0 0 22 22" class="ml-[8px]"><path stroke-width="1.500" d="M5 3c-2 0-2 2-2 4s0 3-2 4c2 1 2 2 2 4s0 4 2 4M17 3c2 0 2 2 2 4s0 3 2 4c-2 1-2 2-2 4s0 4-2 4"/><path stroke="#00f" stroke-width="2" d="M8 5l2 3"/><path stroke="#0a0" stroke-width="2" d="M10 8l2 4"/><path stroke="#e00" stroke-width="2" d="M12 12l2 4"/></svg>
    </div>
    <div class="h-[30px] flex items-center pl-px shrink-0 [&>svg]:w-[22px] [&>svg]:h-[22px]">
      <svg viewBox="0 0 22 22"><path fill="#0cc" stroke-width=".8" d="M6 12h9l5 6H10z"/><path stroke="#fc0" stroke-width="2" stroke-dasharray="2 1.500" d="M5 5h8M5 8h8M5 11h8"/></svg>
      <svg viewBox="0 0 22 22" class="ml-[4px]"><path stroke="#bbb" stroke-width="3.500" d="M5 5l11 11M16 5L5 16"/></svg>
      <svg viewBox="0 0 22 22" class="ml-px"><path stroke="#bbb" stroke-width="3.500" d="M4 11l5 5 9-10"/></svg>
      <svg viewBox="0 0 22 22" class="ml-[7px]" stroke="#999"><path d="M3 5h7l3 2H5zM3 8h7l3 2H5zM3 11h7l3 2H5z"/><path fill="#fff" d="M12 11v9l2-2 2 3 1-1-2-3h3z"/></svg>
      <svg viewBox="0 0 22 22" class="ml-px"><path fill="#fff" stroke-width="1.500" d="M3 8l6-5h8v16H3z"/><path d="M6 10h8M6 13h8M6 16h8"/><path fill="#00007f" stroke="none" d="M17 2h4v6h-4z"/></svg>
      <svg viewBox="0 0 22 22" class="ml-[7px]"><use href="#eye" transform="translate(4 2)"/><use href="#eye" transform="translate(4 10)"/></svg>
      <svg viewBox="0 0 22 22" class="ml-px"><path fill="#fff" d="M5.500 1.500h11v9h-11z"/><path fill="#000" stroke="none" d="M6 10V2h10z"/><use href="#eye" transform="translate(4 12)"/></svg>
      <svg viewBox="0 0 22 22" class="ml-px"><path fill="#ddd" stroke="#bbb" d="M4 11q7-6 14 0q-7 6-14 0z"/></svg>
      <svg viewBox="0 0 22 22" class="ml-[6px]"><path fill="#ff0" d="M7 5.500h8v6H7zM7 13.500h8v6H7z"/><path d="M9 5V3h4v2M9 13v-2h4v2"/><path fill="#000" stroke="none" d="M10 7h2v2h-2zM10 15h2v2h-2z"/></svg>
      <svg viewBox="0 0 22 22" class="ml-[2px]"><path fill="#fff" d="M5.500 1.500h11v8h-11z"/><path fill="#000" stroke="none" d="M6 9V2h10z"/><path fill="#ff0" d="M7 12.500h8v7H7z"/><path fill="#000" stroke="none" d="M10 15h2v2h-2z"/></svg>
      <svg viewBox="0 0 22 22" stroke="#bbb"><path d="M6.500 10.500h9v8h-9zM8.500 10V7c0-3 5-3 5 0v3"/></svg>
    </div>
    <!-- tree -->
    <div class="ml-[4px] w-[277px] h-[162px] mt-[2px] bg-white border-t border-[#b8b8b8] relative shrink-0">
      <i class="absolute left-[31px] top-[25px] h-[34px] border-l border-dotted border-[#777]"></i>
      <i class="absolute left-[31px] top-[35px] w-[10px] border-t border-dotted border-[#777]"></i>
      <i class="absolute left-[31px] top-[58px] w-[10px] border-t border-dotted border-[#777]"></i>
      <div class="h-[23px] flex items-center pl-[7px]">
        <span class="w-[11px] h-[11px] border border-[#888] bg-[#eee] flex items-center justify-center"><i class="w-[7px] h-px bg-[#444]"></i></span>
        <svg class="ml-[5px] w-[14px] h-[14px] mb-[3px]" viewBox="0 0 14 14"><use href="#stk"/></svg>
        <span class="ml-px h-[23px] flex items-center bg-[#b9d8f7] px-[3px]">Layer (24)</span>
      </div>
      <div class="h-[23px] flex items-center pl-[41px]">
        <svg class="w-[18px] h-[18px]" viewBox="0 0 22 22"><path stroke-width="1.800" d="M5 3c-2 0-2 2-2 4s0 3-2 4c2 1 2 2 2 4s0 4 2 4M17 3c2 0 2 2 2 4s0 3 2 4c-2 1-2 2-2 4s0 4-2 4"/><path stroke="#00f" stroke-width="2.500" d="M8 5l2 3"/><path stroke="#0a0" stroke-width="2.500" d="M10 8l2 4"/><path stroke="#e00" stroke-width="2.500" d="M12 12l2 4"/></svg>
        <span class="ml-px">LayersTemplates</span>
      </div>
      <div class="h-[23px] flex items-center pl-[41px]">
        <svg class="w-[18px] h-[18px]" viewBox="0 0 22 22"><path fill="#fff" stroke-width="1.300" d="M1 10h12l-4 5v4l-4 2v-6z"/><path fill="#aaa" d="M5 6l8-3 7 3-8 3zM9 10l8-3 4 3-6 3z"/></svg>
        <span class="ml-px">LayersFilters</span>
      </div>
    </div>
    <!-- layer grid -->
    <div class="ml-[4px] w-[278px] mt-[5px] h-[25px] flex border-t border-[#ddd] border-b-2 border-b-[#999] shrink-0 [&>span]:border-r [&>span]:border-[#aaa] [&>span]:flex [&>span]:items-center [&>span]:justify-center">
      <span class="!justify-start w-[142px] pl-[7px]">Name</span>
      <span class="w-[26px]"><svg class="w-[13px] h-[12px]" viewBox="0 0 13 12"><path stroke="#0a7a2a" stroke-width="2.500" d="M1 6l4 4 7-9"/></svg></span>
      <span class="w-[26px]"><svg class="w-[13px] h-[9px]" viewBox="0 0 13 9"><use href="#eye"/></svg></span>
      <span class="w-[26px]"><svg class="w-[12px] h-[13px]" viewBox="0 0 12 13"><path fill="#ff0" d="M2 5.500h8v7H2z"/><path d="M4 5V2c0-1 4-1 4 0v3"/><path fill="#000" stroke="none" d="M5 8h2v2H5z"/></svg></span>
      <span class="w-[26px]"><svg class="w-[13px] h-[13px]" viewBox="0 0 13 13"><circle cx="6.500" cy="6.500" r="5.500" fill="#eec" stroke="#888"/><circle cx="4" cy="4" r="1.300" fill="#f00" stroke="none"/><circle cx="8.500" cy="3.500" r="1.300" fill="#00f" stroke="none"/><circle cx="3.500" cy="8" r="1.300" fill="#0a0" stroke="none"/><circle cx="8" cy="9" r="1.300" fill="#c0c" stroke="none"/></svg></span>
      <span class="!border-r-0 w-[30px] !justify-start pl-[7px]"><svg class="w-[22px] h-[6px]" viewBox="0 0 22 6"><path stroke="#00007f" stroke-width="2" stroke-dasharray="4 1" d="M0 3h13"/><path d="M20 0v6" stroke-width="2"/></svg></span>
    </div>
    <div class="ml-[4px] w-[278px] flex-1 bg-white relative [&>div]:h-[22px] [&>div]:flex [&>div]:items-center [&>div]:border-b [&>div]:border-[#eee] [&_div>svg]:w-[14px] [&_div>svg]:h-[14px] [&_div>svg]:ml-px [&_div>svg]:mb-[5px] [&_div>span]:ml-[10px] [&_div>span]:w-[117px] [&_div>span]:overflow-hidden [&_div>span]:whitespace-nowrap [&_div>span]:leading-[20px] [&_b]:w-[26px] [&_b]:flex [&_b]:justify-center [&_b>svg]:w-[13px] [&_b>svg]:h-[9px] [&_em]:block [&_em]:w-[21px] [&_em]:h-[19px] [&_em]:border [&_em]:border-[#aaa] [&_u]:block [&_u]:w-[28px] [&_u]:ml-[3px] [&_u]:h-px [&_u]:bg-black">
      <i class="absolute left-[142px] top-0 bottom-0 w-px bg-[#eee]"></i><i class="absolute left-[168px] top-0 bottom-0 w-px bg-[#eee]"></i><i class="absolute left-[194px] top-0 bottom-0 w-px bg-[#eee]"></i><i class="absolute left-[220px] top-0 bottom-0 w-px bg-[#eee]"></i><i class="absolute left-[246px] top-0 bottom-0 w-px bg-[#eee]"></i>
      <div><svg viewBox="0 0 14 14"><use href="#stk"/></svg><span>0</span><b><svg viewBox="0 0 13 9"><path stroke="#0a7a2a" stroke-width="2" d="M2 4l3 4 6-8"/></svg></b><b><svg viewBox="0 0 13 9"><use href="#eye"/></svg></b><b></b><b><em class="bg-[#2a0000]"></em></b><u></u></div>
      <div><svg viewBox="0 0 14 14"><use href="#stk"/></svg><span>Dimensions</span><b></b><b><svg viewBox="0 0 13 9"><use href="#eye"/></svg></b><b></b><b><em class="bg-black"></em></b><u></u></div>
      <div><svg viewBox="0 0 14 14"><use href="#stk"/></svg><span>$CONSTRUCTION</span><b></b><b><svg viewBox="0 0 13 9"><use href="#eye"/></svg></b><b></b><b><em class="bg-[#bdd5d5]"></em></b><u class="!bg-transparent border-t border-dashed border-black"></u></div>
      <div><svg viewBox="0 0 14 14"><use href="#stk"/></svg><span>Wregi_org_spline</span><b></b><b></b><b></b><b><em class="bg-[#f00]"></em></b><u></u></div>
      <div><svg viewBox="0 0 14 14"><use href="#stk"/></svg><span>Obrys</span><b></b><b><svg viewBox="0 0 13 9"><use href="#eye"/></svg></b><b></b><b><em class="bg-[#00f]"></em></b><u></u></div>
      <div><svg viewBox="0 0 14 14"><use href="#stk"/></svg><span>7</span><b></b><b><svg viewBox="0 0 13 9"><use href="#eye"/></svg></b><b></b><b><em class="bg-[#0f0]"></em></b><u></u></div>
      <div><svg viewBox="0 0 14 14"><use href="#stk"/></svg><span>Skrzydlo</span><b></b><b><svg viewBox="0 0 13 9"><use href="#eye"/></svg></b><b></b><b><em class="bg-[#f00]"></em></b><u></u></div>
      <div><svg viewBox="0 0 14 14"><use href="#stk"/></svg><span>Poziomy org.</span><b></b><b></b><b></b><b><em class="bg-[#f00]"></em></b><u></u></div>
      <div><svg viewBox="0 0 14 14"><use href="#stk"/></svg><span>Poziomy</span><b></b><b><svg viewBox="0 0 13 9"><use href="#eye"/></svg></b><b></b><b><em class="bg-[#00f]"></em></b><u></u></div>
      <div><svg viewBox="0 0 14 14"><use href="#stk"/></svg><span>Poziomy żebra</span><b></b><b><svg viewBox="0 0 13 9"><use href="#eye"/></svg></b><b></b><b><em class="bg-[#00f]"></em></b><u></u></div>
      <div><svg viewBox="0 0 14 14"><use href="#stk"/></svg><span>Kadlub</span><b></b><b><svg viewBox="0 0 13 9"><use href="#eye"/></svg></b><b></b><b><em class="bg-[#0f0]"></em></b><u></u></div>
      <div><svg viewBox="0 0 14 14"><use href="#stk"/></svg><span>Kadłub org.</span><b></b><b></b><b></b><b><em class="bg-black"></em></b><u></u></div>
      <div><svg viewBox="0 0 14 14"><use href="#stk"/></svg><span>Orginal zebra pio</span><b></b><b></b><b></b><b><em class="bg-[#f00]"></em></b><u></u></div>
      <div><svg viewBox="0 0 14 14"><use href="#stk"/></svg><span>Dolny obrys_offse</span><b></b><b></b><b></b><b><em class="bg-[#0f0]"></em></b><u></u></div>
      <div><svg viewBox="0 0 14 14"><use href="#stk"/></svg><span>Wregi_org_polylir</span><b></b><b></b><b></b><b><em class="bg-[#f00]"></em></b><u></u></div>
      <div><svg viewBox="0 0 14 14"><use href="#stk"/></svg><span>Zegary</span><b></b><b></b><b></b><b><em class="bg-[#f0f]"></em></b><u></u></div>
      <div><svg viewBox="0 0 14 14"><use href="#stk"/></svg><span>Cieciwy wreg</span><b></b><b></b><b></b><b><em class="bg-[#0f0]"></em></b><u></u></div>
      <div><svg viewBox="0 0 14 14"><use href="#stk"/></svg><span>Podklad</span><b></b><b></b><b></b><b><em class="bg-[#2a0000]"></em></b><u></u></div>
      <div><svg viewBox="0 0 14 14"><use href="#stk"/></svg><span>Wręgi</span><b></b><b><svg viewBox="0 0 13 9"><use href="#eye"/></svg></b><b></b><b><em class="bg-[#f00]"></em></b><u></u></div>
      <div><svg viewBox="0 0 14 14"><use href="#stk"/></svg><span>napis</span><b></b><b></b><b></b><b><em class="bg-[#f00]"></em></b><u></u></div>
      <div><svg viewBox="0 0 14 14"><use href="#stk"/></svg><span>Pionowy</span><b></b><b><svg viewBox="0 0 13 9"><use href="#eye"/></svg></b><b></b><b><em class="bg-[#0080ff]"></em></b><u></u></div>
      <div><svg viewBox="0 0 14 14"><use href="#stk"/></svg><span>Roboczy</span><b></b><b><svg viewBox="0 0 13 9"><use href="#eye"/></svg></b><b></b><b><em class="bg-[#2a0000]"></em></b><u></u></div>
      <div><svg viewBox="0 0 14 14"><use href="#stk"/></svg><span>SK</span><b></b><b></b><b></b><b><em class="bg-[#2a0000]"></em></b><u></u></div>
      <div><svg viewBox="0 0 14 14"><use href="#stk"/></svg><span>Wręgi gotowe</span><b></b><b><svg viewBox="0 0 13 9"><use href="#eye"/></svg></b><b></b><b><em class="bg-black"></em></b><u></u></div>
    </div>
    <div class="ml-[3px] w-[278px] h-[20px] mt-[3px] mb-[9px] flex items-center shrink-0 border-b border-white">
      <svg class="w-[22px] h-[12px]" viewBox="0 0 22 12"><path stroke="#555" stroke-width="1.500" d="M13 1L8 6l5 5"/></svg>
      <i class="w-[77px] h-[20px] bg-[#c8c8c8]"></i>
      <svg class="ml-auto w-[22px] h-[12px]" viewBox="0 0 22 12"><path stroke="#555" stroke-width="1.500" d="M9 1l5 5-5 5"/></svg>
    </div>
  </aside>

  <!-- drawing column -->
  <div class="ml-[6px] w-[1916px] shrink-0 flex flex-col">
    <div class="h-[17px] flex shrink-0">
      <div class="w-[16px] bg-[#c9c9c9] border-l border-[#999] flex items-center justify-center"><svg class="w-[12px] h-[15px]" viewBox="0 0 12 15"><path stroke-width="1.500" d="M3 14V2M1 5l2-3 2 3M3 14h8"/></svg></div>
      <svg class="w-[1897px] h-[17px]" viewBox="340 155 1897 17">
        <rect x="340" y="168" width="1897" height="4" fill="url(#rt)" stroke="none"/>
        <path d="M397 157v15M467 157v15M536 157v15M606 157v15M676 157v15M746 157v15M815 157v15M885 157v15M955 157v15M1025 157v15M1094 157v15M1164 157v15M1234 157v15M1303 157v15M1373 157v15M1443 157v15M1513 157v15M1582 157v15M1652 157v15M1722 157v15M1792 157v15M1861 157v15M1931 157v15M2001 157v15M2071 157v15M2140 157v15"/>
        <path stroke="#0f0" d="M2210 155v17"/>
        <g fill="#000" stroke="none" font-size="10">
          <text x="399" y="167">3200 mm</text><text x="469" y="167">3300 mm</text><text x="538" y="167">3400 mm</text><text x="608" y="167">3500 mm</text><text x="678" y="167">3600 mm</text><text x="748" y="167">3700 mm</text><text x="817" y="167">3800 mm</text><text x="887" y="167">3900 mm</text><text x="957" y="167">4000 mm</text><text x="1027" y="167">4100 mm</text><text x="1096" y="167">4200 mm</text><text x="1166" y="167">4300 mm</text><text x="1236" y="167">4400 mm</text><text x="1305" y="167">4500 mm</text><text x="1375" y="167">4600 mm</text><text x="1445" y="167">4700 mm</text><text x="1515" y="167">4800 mm</text><text x="1584" y="167">4900 mm</text><text x="1654" y="167">5000 mm</text><text x="1724" y="167">5100 mm</text><text x="1794" y="167">5200 mm</text><text x="1863" y="167">5300 mm</text><text x="1933" y="167">5400 mm</text><text x="2003" y="167">5500 mm</text><text x="2073" y="167">5600 mm</text><text x="2142" y="167">5700 mm</text><text x="2212" y="167">5800 mm</text>
        </g>
      </svg>
    </div>
    <div class="flex-1 flex min-h-0">
      <svg class="w-[16px] h-[1136px] shrink-0 border-l border-[#999]" viewBox="324 172 16 1136">
        <rect x="336" y="172" width="4" height="1136" fill="url(#rv)" stroke="none"/>
        <path d="M327 200h13M327 270h13M327 340h13M327 410h13M327 480h13M327 550h13M327 620h13M327 690h13M327 760h13M327 830h13M327 900h13M327 970h13M327 1040h13M327 1110h13M327 1180h13M327 1250h13"/>
        <path stroke="#f0f" d="M324 598h10"/><path stroke="#0f0" d="M334 598h6"/>
        <g transform="rotate(-90)" fill="#000" stroke="none" font-size="10">
          <text x="-198" y="336">1900 mm</text><text x="-268" y="336">1800 mm</text><text x="-338" y="336">1700 mm</text><text x="-408" y="336">1600 mm</text><text x="-478" y="336">1500 mm</text><text x="-548" y="336">1400 mm</text><text x="-618" y="336">1300 mm</text><text x="-688" y="336">1200 mm</text><text x="-758" y="336">1100 mm</text><text x="-828" y="336">1000 mm</text><text x="-898" y="336">900 mm</text><text x="-968" y="336">800 mm</text><text x="-1038" y="336">700 mm</text><text x="-1108" y="336">600 mm</text><text x="-1178" y="336">500 mm</text><text x="-1248" y="336">400 mm</text><text x="-1318" y="336">300 mm</text>
        </g>
      </svg>
      <div class="flex-1 flex flex-col min-w-0">
        <div class="flex h-[1113px] shrink-0">
          <!-- drawing -->
          <svg class="w-[1875px] h-[1113px] bg-white shrink-0" viewBox="340 172 1875 1113" shape-rendering="crispEdges">
            <path stroke="#bfd8d6" stroke-dasharray="30 6 3 6" d="M340 336H2215M340 378H2215M340 424H2215M340 469H2215M340 514H2215M340 560H2215M340 605H2215M340 650H2215M340 696H2215M340 741H2215M340 786H2215M340 831H2215M340 877H2215M340 922H2215M340 968H2215M340 1013H2215M340 1058H2215M340 1103H2215M340 1149H2215M340 1187H2215M340 1215H2215M340 1243H2215M340 1271H2215"/>
            <path stroke="#c6dcda" stroke-dasharray="50 6 3 6" d="M720 172V1285M975 172V1285M1332 172V1285"/>
            <g stroke="#f00">
              <path d="M924 1285L929 1058L935 880L938 770L948 337L949 302Q950 294 957 294H1022Q1027 294 1028 302L1034 337L1054 770L1060 880L1068 1058L1079 1285"/>
              <path d="M1010 337L1027 683H1050"/>
              <path d="M1273 1285L1278 1058L1282 880L1288 770L1298 337L1299 302Q1300 294 1308 294H1372Q1377 294 1378 302L1385 337L1405 770L1409 880L1417 1058L1428 1285"/>
              <path d="M1361 337L1378 683H1401"/>
              <path d="M981.500 904h7v160h-7zM1330.500 904h6v160h-6zM1018 995h4v9h6v-9h4M1367 995h4v9h6v-9h4"/>
              <path d="M1512 1174V1285M1506 1178V1285M932 1058H1069M933 922H1062"/>
            </g>
            <g stroke="#0f0" stroke-width="2">
              <use href="#foil" transform="translate(948 336) scale(86 6.200)"/>
              <use href="#foil" transform="translate(934 922) scale(128 9.500)"/>
              <use href="#foil" transform="translate(930 1058) scale(139 10)"/>
              <use href="#foil" transform="translate(1298 336) scale(87 6.200)"/>
              <use href="#foil" transform="translate(1297 378) scale(90 6.500)"/>
              <use href="#foil" transform="translate(1296 424) scale(93 6.800)"/>
              <use href="#foil" transform="translate(1295 469) scale(96 7)"/>
              <use href="#foil" transform="translate(1293 514) scale(100 7.200)"/>
              <use href="#foil" transform="translate(1292 560) scale(103 7.500)"/>
              <use href="#foil" transform="translate(1291 605) scale(106 7.700)"/>
              <use href="#foil" transform="translate(1290 650) scale(109 8)"/>
              <use href="#foil" transform="translate(1289 696) scale(112 8.200)"/>
              <use href="#foil" transform="translate(1287 741) scale(117 8.500)"/>
              <use href="#foil" transform="translate(1286 786) scale(120 8.800)"/>
              <use href="#foil" transform="translate(1285 831) scale(123 9)"/>
              <use href="#foil" transform="translate(1284 877) scale(126 9.200)"/>
              <use href="#foil" transform="translate(1283 922) scale(129 9.500)"/>
              <use href="#foil" transform="translate(1281 968) scale(133 9.700)"/>
              <use href="#foil" transform="translate(1280 1013) scale(136 10)"/>
              <use href="#foil" transform="translate(1279 1058) scale(139 10.200)"/>
              <use href="#foil" transform="translate(1278 1103) scale(142 10.500)"/>
              <use href="#foil" transform="translate(1276 1149) scale(146 10.800)"/>
              <use href="#foil" transform="translate(1275 1187) scale(149 11)"/>
              <use href="#foil" transform="translate(1275 1215) scale(150 11)"/>
              <use href="#foil" transform="translate(1274 1243) scale(153 11.200)"/>
              <use href="#foil" transform="translate(1273 1271) scale(155 11.400)"/>
              <path d="M982 914h6v10h-6zM982 1048h6v14h-6z"/>
            </g>
            <use href="#sp" x="975" y="336"/><use href="#sp" x="975" y="922"/><use href="#sp" x="975" y="1058"/>
            <use href="#sp" x="1332" y="336"/><use href="#sp" x="1332" y="378"/><use href="#sp" x="1332" y="424"/><use href="#sp" x="1332" y="469"/><use href="#sp" x="1332" y="514"/><use href="#sp" x="1332" y="560"/><use href="#sp" x="1332" y="605"/><use href="#sp" x="1332" y="650"/><use href="#sp" x="1332" y="696"/><use href="#sp" x="1332" y="741"/><use href="#sp" x="1332" y="786"/><use href="#sp" x="1332" y="831"/><use href="#sp" x="1332" y="877"/><use href="#sp" x="1332" y="922"/><use href="#sp" x="1332" y="968"/><use href="#sp" x="1332" y="1013"/><use href="#sp" x="1332" y="1058"/><use href="#sp" x="1332" y="1103"/><use href="#sp" x="1332" y="1149"/><use href="#sp" x="1332" y="1187"/><use href="#sp" x="1332" y="1215"/><use href="#sp" x="1332" y="1243"/><use href="#sp" x="1332" y="1271"/>
            <g shape-rendering="auto">
              <path stroke="#000" d="M1512 1190v22M1512 1228v10"/>
              <ellipse cx="1333" cy="1214" rx="2.500" ry="4"/><ellipse cx="1333" cy="1240" rx="2.500" ry="4"/><ellipse cx="1333" cy="1267" rx="2" ry="3.500"/>
              <ellipse cx="1512" cy="1220" rx="3" ry="4"/><ellipse cx="1512" cy="1247" rx="3" ry="4"/><ellipse cx="1512" cy="1272" rx="3" ry="4"/>
            </g>
            <path stroke="#000" stroke-dasharray="6 1" d="M1600 1187h13M1635 1187h13M1600 1215h13M1635 1215h13M1600 1243h13M1635 1243h13M1600 1271h13M1635 1271h13"/>
          </svg>
          <!-- vertical scrollbar -->
          <div class="flex-1 flex flex-col items-center pl-px pt-[7px] pb-[5px]">
            <svg class="w-[14px] h-[10px]" viewBox="0 0 14 10"><path stroke="#555" stroke-width="1.500" d="M2 8l5-5 5 5"/></svg>
            <i class="w-[18px] h-[147px] bg-[#b8b8b8] mt-[363px]"></i>
            <svg class="mt-auto w-[14px] h-[10px]" viewBox="0 0 14 10"><path stroke="#555" stroke-width="1.500" d="M2 2l5 5 5-5"/></svg>
          </div>
        </div>
        <!-- tabs -->
        <div class="h-[23px] flex items-center shrink-0 border-t border-[#ddd]">
          <div class="ml-[11px] w-[71px] h-[22px] pb-[2px] bg-white border-b border-x border-[#555] rounded-b-[3px] flex items-center justify-center gap-[2px] -mt-px">
            <svg class="size-[14px]" viewBox="0 0 14 14"><path fill="#ddd" d="M3 4l5-3 4 3v6l-4 3-5-3z"/><circle cx="6" cy="7" r="2.500" fill="#fff"/></svg>
            <span>Model</span>
          </div>
          <div class="w-[87px] h-[21px] pb-[2px] bg-[#e0e0e0] border-b border-r border-[#aaa] rounded-b-[3px] flex items-center justify-center gap-[2px] text-[#777]">
            <svg class="size-[13px]" viewBox="0 0 13 13"><path fill="#fff" d="M2.500 1.500h6l2 2v8h-8z"/><text x="4" y="10" class="text-[7px] fill-black stroke-none">1</text></svg>
            <span>Layout 1</span>
          </div>
          <div class="ml-[2px] w-[82px] h-[21px] pb-[2px] bg-[#e0e0e0] border-b border-r border-[#aaa] rounded-b-[3px] flex items-center justify-center gap-[2px] text-[#777]">
            <svg class="size-[13px]" viewBox="0 0 13 13"><path fill="#fff" d="M2.500 1.500h6l2 2v8h-8z"/><text x="4" y="10" class="text-[7px] fill-black stroke-none">2</text></svg>
            <span>Layout1</span>
          </div>
          <i class="ml-[23px] w-px h-[21px] bg-[#555]"></i>
          <svg class="ml-[7px] w-[12px] h-[14px]" viewBox="0 0 12 14"><path stroke="#444" stroke-width="1.500" d="M8 2L3 7l5 5"/></svg>
          <i class="ml-[976px] w-[168px] h-[20px] bg-[#c8c8c8]"></i>
          <svg class="ml-[420px] w-[12px] h-[14px]" viewBox="0 0 12 14"><path stroke="#444" stroke-width="1.500" d="M4 2l5 5-5 5"/></svg>
        </div>
      </div>
    </div>
  </div>

  <!-- tools column -->
  <div class="ml-[2px] w-[286px] shrink-0 flex flex-col">
    <div class="h-[786px] bg-[#b1c5dc] flex flex-col border-t border-[#666] shrink-0">
      <div class="h-[27px] bg-linear-to-b from-[#b8cbde] to-[#dfe8f1] flex items-center pl-[4px] border-l border-[#555] shrink-0">
        <span class="text-[15px] text-[#222]">Tools</span>
        <svg class="ml-auto w-[20px] h-[20px]" viewBox="0 0 20 20"><use href="#pin"/></svg>
        <svg class="ml-[4px] mr-px w-[15px] h-[15px] bg-[#d6dbe0] border border-white" viewBox="0 0 15 15"><path stroke="#fff" stroke-width="2" d="M3 3l9 9M12 3l-9 9"/></svg>
      </div>
      <div class="h-[30px] bg-white flex items-center pl-[2px] shrink-0">
        <svg class="w-[22px] h-[22px] bg-[#c0dcf5] border border-[#8fc1ea]" viewBox="0 0 22 22"><path fill="#fff" d="M7 3v13l3-3 2 5 2-1-2-5h4z"/></svg>
        <svg class="w-[22px] h-[22px] ml-px" viewBox="0 0 22 22"><path d="M3 16l6-9 8 9"/><path fill="#fff" d="M10 9v10l2-2 2 3 1-1-2-3h3z"/></svg>
        <svg class="w-[22px] h-[22px]" viewBox="0 0 22 22"><circle cx="11" cy="11" r="7" fill="#00a"/><path fill="#0a0" stroke="none" d="M8 5l6-1 2 4-5 2z"/><path stroke-width="1.500" d="M15 20c3-2 4-8 3-15"/></svg>
        <i class="ml-[2px] w-px h-[24px] bg-[#999]"></i>
        <div class="ml-[3px] w-[100px] h-[25px] border-2 border-[#aaa] flex items-center justify-between pl-[2px]">
          <span class="text-[14.500px]">Sketch</span>
          <span class="w-[18px] h-full bg-[#c8c8c8] flex items-center justify-center"><svg class="w-[10px] h-[6px]" viewBox="0 0 10 6"><use href="#dd"/></svg></span>
        </div>
        <svg class="ml-[3px] w-[22px] h-[22px]" viewBox="0 0 22 22"><path fill="#e00" stroke="none" d="M3 10h12v10H3z"/><path fill="#444" stroke="none" d="M5 4l5 4 4-4 3 3-4 4-8-2z"/><path fill="#000" stroke="none" d="M18 21h4v-4z"/></svg>
      </div>
      <div class="flex-1 pt-px [&>h3]:h-[25px] [&>h3]:mx-[2px] [&>h3]:mt-[3px] [&>h3]:flex [&>h3]:items-center [&>h3]:justify-between [&>h3]:pl-[13px] [&>h3]:pr-[5px] [&>h3]:font-bold [&>h3]:text-[#0a5ea8] [&>h3]:bg-linear-to-r [&>h3]:from-white [&>h3]:to-[#dbe3ec] [&>h3]:rounded-t-[3px] [&_h3>svg]:size-[16px] [&>div]:mx-[2px] [&>div]:bg-[#f2f4f9] [&>div]:flex [&>div]:flex-wrap [&>div]:content-start [&>div]:pl-[11px] [&>div]:pt-[8px] [&_div>svg]:size-[28px]">
        <h3>Snap Modes<svg viewBox="0 0 16 16"><use href="#dz"/></svg></h3>
        <div class="h-[100px]">
          <svg viewBox="0 0 28 28"><path stroke="#777" d="M11 16l6-7 3 3-6 7c-2 1-4-1-3-3z"/><path stroke="#f00" stroke-dasharray="1 4" d="M7 20h4M21 7l3 1"/></svg>
          <svg viewBox="0 0 28 28" class="bg-[#fdb96d] border border-[#00007f]"><path stroke="#666" stroke-width="2" d="M6 14h5"/><path d="M11 14h6M15 11l3 3-3 3"/><circle cx="20" cy="14" r="2" fill="#e00" stroke="none"/></svg>
          <svg viewBox="0 0 28 28" class="bg-[#fdb96d] border border-[#00007f]"><path d="M6 19l7-7"/><path stroke="#777" stroke-width="1.500" d="M13 12l8 8"/><circle cx="14" cy="12" r="2" fill="#e00" stroke="none"/></svg>
          <svg viewBox="0 0 28 28"><path d="M7 20L21 8"/><path fill="#fff" stroke="#e00" d="M11 15h4v3h-4zM16 11h3v3h-3z"/></svg>
          <svg viewBox="0 0 28 28" class="bg-[#fdb96d] border border-[#00007f]"><path d="M7 15A7 7 0 0 1 21 15"/><circle cx="14" cy="15" r="1.500" fill="#e00" stroke="none"/></svg>
          <svg viewBox="0 0 28 28"><path d="M7.500 10.500h11v11h-11zM7.500 10.500l3-4h11l-3 4M18.500 21.500l3-4v-11"/><path fill="#e00" stroke="none" d="M12 14h3v3h-3z"/></svg>
          <svg viewBox="0 0 28 28"><circle cx="14" cy="14" r="7" fill="#ddd" stroke="#f55"/><path stroke="#777" d="M14 6v16M6 14h16"/></svg>
          <svg viewBox="0 0 28 28" class="bg-[#fdb96d] border border-[#00007f]"><path d="M6 6l16 16M22 6L6 22"/><circle cx="14" cy="14" r="2" fill="#e00" stroke="none"/></svg>
          <svg viewBox="0 0 28 28"><path stroke="#aaa" stroke-dasharray="1.500 2.500" d="M6 8h14M6 12h14M6 16h14M6 20h12"/><path fill="#e00" stroke="none" d="M19 19h3v3h-3z"/></svg>
          <svg viewBox="0 0 28 28"><path stroke="#777" stroke-width="1.500" d="M7 13l6-6M7 13l10 9M13 7l7 7"/><path stroke="#000" d="M10 13l6 6"/></svg>
          <svg viewBox="0 0 28 28"><path d="M8 21l2-11h9l3 11z"/><path fill="#e00" stroke="none" d="M13 14h3v3h-3z"/></svg>
          <svg viewBox="0 0 28 28"><path d="M7 14l9-5M9 22c0-6 4-10 12-10"/><circle cx="12" cy="12" r="1.500" fill="#e00" stroke="none"/></svg>
          <svg viewBox="0 0 28 28"><path stroke="#777" d="M8 21h12M14 7v14M11 7h6"/><path fill="#e00" stroke="none" d="M13 6h2v3h-2z"/></svg>
          <svg viewBox="0 0 28 28"><path stroke="#777" d="M6 14h16"/><path stroke="#777" stroke-dasharray="3 2" d="M14 5v18"/><path fill="#e00" stroke="none" d="M13 6h2v2h-2zM13 13h2v2h-2z"/></svg>
          <svg viewBox="0 0 28 28"><path stroke="#999" d="M14 5v18M5 14h18M7 7l14 14M21 7L7 21"/><path fill="#e00" stroke="none" d="M20 6h3v3h-3z"/></svg>
          <svg viewBox="0 0 28 28"><path fill="#444" stroke="none" d="M6 20l7-11 9 11z"/><circle cx="16" cy="16" r="2.500" fill="#e00" stroke="none"/></svg>
          <svg viewBox="0 0 28 28" class="bg-[#fdb96d] border border-[#00007f]"><path stroke-width="2" d="M7 17V11c0-6 14-6 14 0v6"/><path d="M7 22l7-6 7 6"/><circle cx="14" cy="15" r="2" fill="#e00" stroke="none"/></svg>
          <svg viewBox="0 0 28 28" class="bg-[#fdb96d] border border-[#00007f]"><path stroke="#777" d="M9 6v16"/><path stroke="#a04020" d="M12 6v16"/><path d="M13 6l9 13"/><circle cx="14" cy="9" r="2" fill="#e00" stroke="none"/></svg>
          <svg viewBox="0 0 28 28" class="bg-[#fdb96d] border border-[#00007f]"><path stroke="#654" d="M7 21l7-14 7 14"/><path stroke="#e00" stroke-width="2" d="M10 15l1-2M17 13l1 2"/></svg>
          <svg viewBox="0 0 28 28"><path stroke="#f00" d="M9 7l6 4v13l-6-4z"/><path fill="#888" stroke="none" d="M13 12h5v6h-5z"/><path stroke="#00f" d="M18 15h3"/></svg>
          <svg viewBox="0 0 28 28"><path stroke="#777" d="M7 21L21 7"/><path stroke="#333" stroke-width="2" d="M7 20l1-1M13 14l1-1M20 8l1-1"/></svg>
        </div>
        <h3>Line<svg viewBox="0 0 16 16"><use href="#dz"/></svg></h3>
        <div class="h-[72px]">
          <svg viewBox="0 0 28 28"><path d="M8 20L20 8"/><path stroke="#00f" stroke-width="2" d="M7 21l1-1M20 8l1-1"/></svg>
          <svg viewBox="0 0 28 28"><path stroke="#333" stroke-dasharray="3 1" d="M8 14l6-6M11 18l-3-4M14 8l5 5"/><path stroke="#00f" stroke-width="2" d="M7 14l1-1M19 13l1-1M14 21l1-1M14 8l1-1"/></svg>
          <svg viewBox="0 0 28 28"><circle cx="14" cy="14" r="6"/><path fill="#00f" stroke="none" d="M13 13h2v2h-2zM7 6h3v3H7z"/></svg>
          <svg viewBox="0 0 28 28"><path d="M8 7l12 7-9 6z"/><path stroke="#00f" stroke-width="2" d="M7 7h2M20 14h1"/></svg>
          <svg viewBox="0 0 28 28"><path stroke-width="1.500" d="M8 8h12v12H8z"/><path fill="#00f" stroke="none" d="M7 7h2v2H7zM19 19h3v3h-3z"/></svg>
          <svg viewBox="0 0 28 28"><path d="M6 14l7-7 9 6-7 7z"/><path stroke="#00f" d="M18 20l3-3v4"/></svg>
          <svg viewBox="0 0 28 28"><path d="M7 14l7-6M7 14l7 6"/><path stroke="#00f" stroke-width="2" d="M14 8l1-1M19 19l1 1"/></svg>
          <svg viewBox="0 0 28 28"><path d="M6 17L18 6M10 22L22 11"/><path stroke="#00f" stroke-width="2" d="M13 13l2-2"/></svg>
          <svg viewBox="0 0 28 28"><circle cx="13" cy="15" r="6" stroke-width="1.200"/><path d="M8 7l13 7"/><path stroke="#00f" stroke-width="2" d="M13 8h1"/></svg>
          <svg viewBox="0 0 28 28"><path d="M6 7c7 0 10 6 5 14"/><path stroke="#c00" stroke-width="1.500" d="M10 7l5 5"/><path d="M15 12l7 8"/><path stroke="#00f" stroke-width="2" d="M21 20h2"/></svg>
          <svg viewBox="0 0 28 28"><path d="M6 7c7 0 10 6 5 14M13 8l9 12"/><path stroke="#f00" stroke-width="2" d="M21 20h2"/></svg>
          <svg viewBox="0 0 28 28"><path d="M6 8c7-3 14 0 15 14M10 6l12 8"/><path stroke="#00f" d="M20 19l2 3"/></svg>
          <svg viewBox="0 0 28 28"><path d="M9 14c5 1 7-1 6-6M18 14c-3-1-3 4-2 7"/><path stroke="#00f" stroke-width="2" d="M13 14h1"/></svg>
          <svg viewBox="0 0 28 28"><path stroke="#223" d="M14 5v16"/><path stroke="#00f" stroke-width="1.500" d="M8 14l6 7 6-7"/></svg>
          <svg viewBox="0 0 28 28"><path stroke-width="1.500" d="M7 22L22 6"/><path stroke="#00f" stroke-dasharray="2 3" d="M4 21L19 5M9 25L24 9"/></svg>
        </div>
        <h3>Circle/Ellipse<svg viewBox="0 0 16 16"><use href="#dz"/></svg></h3>
        <div class="h-[72px]">
          <svg viewBox="0 0 28 28"><circle cx="14" cy="14" r="6.500"/><path fill="#00f" stroke="none" d="M13 13h3v3h-3zM19 13h3v3h-3z"/></svg>
          <svg viewBox="0 0 28 28"><circle cx="14" cy="14" r="7.500"/><circle cx="14" cy="14" r="5"/><circle cx="14" cy="14" r="2.500"/><path fill="#00f" stroke="none" d="M14 13h9v3h-9z"/></svg>
          <svg viewBox="0 0 28 28"><circle cx="14" cy="14" r="7"/><path fill="#00f" stroke="none" d="M6 13h3v3H6zM19 13h3v3h-3z"/></svg>
          <svg viewBox="0 0 28 28"><path d="M7 13h8M10 8v10"/><path d="M12 8a7 7 0 1 1-2 9"/><path fill="#00f" stroke="none" d="M9 12h2v2H9z"/></svg>
          <svg viewBox="0 0 28 28"><circle cx="14" cy="14" r="6"/><path d="M6 7h16M14 8v13"/><path fill="#00f" stroke="none" d="M8 19h3v3H8zM18 19h3v3h-3z"/></svg>
          <svg viewBox="0 0 28 28"><circle cx="14" cy="14" r="7"/><path fill="#00f" stroke="none" d="M8 8h2v2H8zM18 8h2v2h-2zM13 20h2v2h-2z"/></svg>
          <svg viewBox="0 0 28 28"><circle cx="14" cy="14" r="6"/><path stroke="#333" d="M9 6l2 3M19 6l-2 3M7 14h2M19 14h2"/><path fill="#00f" stroke="none" d="M8 8h2v2H8zM18 8h2v2h-2zM9 19h2v2H9zM17 19h2v2h-2z"/></svg>
          <svg viewBox="0 0 28 28"><circle cx="14" cy="12" r="5"/><path d="M9 22c0-4 2-5 3-5M19 22c0-4-2-5-3-5"/><path fill="#00f" stroke="none" d="M13 6h2v2h-2zM8 15h2v2H8zM18 15h2v2h-2z"/></svg>
          <svg viewBox="0 0 28 28"><ellipse cx="14" cy="14" rx="6" ry="4"/><path fill="#00f" stroke="none" d="M7 13h2v2H7zM19 13h2v2h-2z"/></svg>
          <svg viewBox="0 0 28 28"><path d="M8 18C8 12 15 8 20 9c0 6-6 11-12 9z"/><path stroke="#00f" d="M8 18L20 9"/></svg>
          <svg viewBox="0 0 28 28"><ellipse cx="14" cy="18" rx="6" ry="4"/><circle cx="14" cy="9" r="3" stroke="#778"/><path fill="#00f" stroke="none" d="M13 8h2v2h-2z"/></svg>
          <svg viewBox="0 0 28 28"><circle cx="14" cy="14" r="7" stroke-width="1.500"/><path stroke="#00f" stroke-dasharray="1.500 5" stroke-width="2" d="M5 5h18M5 23h18M14 10v8"/></svg>
        </div>
        <h3>Arc<svg viewBox="0 0 16 16"><use href="#dz"/></svg></h3>
        <div class="h-[72px]">
          <svg viewBox="0 0 28 28"><path d="M7 20C5 8 16 5 21 13L8 19"/><path fill="#00f" stroke="none" d="M7 19h2v2H7zM20 12h2v2h-2z"/></svg>
          <svg viewBox="0 0 28 28" stroke-width="1.500"><path d="M7 20C5 8 18 4 22 15M10 20c-2-7 7-11 9-5"/><path fill="#00f" stroke="none" d="M13 13h3v3h-3zM21 15h2v2h-2zM6 19h2v2H6z"/></svg>
          <svg viewBox="0 0 28 28"><path d="M8 11c-2 7 6 11 12 5 2-2 1-6-1-8"/><path fill="#00f" stroke="none" d="M7 10h2v2H7zM18 7h2v2h-2z"/></svg>
          <svg viewBox="0 0 28 28"><path d="M7 8l13 13M9 20C6 13 14 8 20 14"/><path stroke="#00f" stroke-dasharray="1 2" d="M11 17l7 2"/></svg>
          <svg viewBox="0 0 28 28"><path d="M10 7c7-2 12 4 9 10-2 3-6 4-9 3"/><text x="13" y="17" class="text-[7px] fill-black stroke-none">3</text><path fill="#00f" stroke="none" d="M8 6h2v2H8zM7 19h2v2H7z"/></svg>
          <svg viewBox="0 0 28 28"><path d="M10 7c7-2 12 4 9 10-2 3-6 4-9 3"/><text x="13" y="17" class="text-[7px] fill-black stroke-none">3</text><path fill="#00f" stroke="none" d="M8 19h3v3H8zM18 12h3v2h-3z"/></svg>
          <svg viewBox="0 0 28 28"><path d="M9 9l3 3M19 9l-3 3M9 14c0 8 10 8 10 0M9 9h10"/><path fill="#00f" stroke="none" d="M8 13h2v2H8zM18 13h2v2h-2z"/></svg>
          <svg viewBox="0 0 28 28" stroke-width="1.500"><path d="M8 15c-1-8 12-10 13 0-1 6-10 7-13 0z"/><path fill="#00f" stroke="none" d="M13 12h4v4h-4z"/></svg>
          <svg viewBox="0 0 28 28"><path d="M14 7c7 3 7 8 0 10-7-2-7-7 0-10zM12 22l2-5 2 5"/><path fill="#00f" stroke="none" d="M13 6h2v2h-2z"/></svg>
          <svg viewBox="0 0 28 28"><path d="M8 19C6 11 16 7 21 13L9 10"/><path fill="#00f" stroke="none" d="M7 18h2v2H7zM14 8h2v2h-2zM20 13h2v2h-2z"/></svg>
          <svg viewBox="0 0 28 28" stroke-width="1.300"><path d="M7 10c0 9 13 10 14 0"/><path fill="#00f" stroke="none" d="M6 9h3v2H6zM19 9h3v2h-3zM13 11h3v2h-3z"/></svg>
          <svg viewBox="0 0 28 28"><path d="M8 20c0-5 5-11 12-11 0 6-4 10-10 10zM8 20h5M8 15v5"/></svg>
          <svg viewBox="0 0 28 28"><path d="M8 21c0-9 12-9 12 0"/><text x="10" y="11" class="text-[7px] fill-[#33a] stroke-none">ab</text></svg>
        </div>
        <h3>Curve<svg viewBox="0 0 16 16"><use href="#dz"/></svg></h3>
        <div class="h-[44px]">
          <svg viewBox="0 0 28 28"><path d="M8 21C8 8 20 8 20 21"/><path fill="#00f" stroke="none" d="M8 7h2v2H8zM18 7h2v2h-2zM7 20h2v2H7zM19 20h2v2h-2z"/></svg>
          <svg viewBox="0 0 28 28"><path d="M9 18c8 1 2-9 10-8"/><path stroke="#00f" stroke-width="2" stroke-dasharray="2 5" d="M8 19l12-10"/></svg>
          <svg viewBox="0 0 28 28"><path stroke-width="1.200" d="M8 21C8 6 20 6 20 21"/><path stroke="#00f" stroke-width="2" d="M7 21h2M19 21h2"/></svg>
          <svg viewBox="0 0 28 28"><path d="M13 11c-4 0-4 7 1 7s6-9 0-10-8 4-6 7"/><path stroke="#00f" stroke-width="2" d="M8 15h1"/></svg>
          <svg viewBox="0 0 28 28" stroke="#7a5ae0"><path d="M13 11c-4 0-4 7 1 7s6-9 0-10-8 4-6 7"/><path stroke="#e00" d="M14 14h1"/></svg>
          <svg viewBox="0 0 28 28"><path d="M10 7c3-2 6-2 8 0 4 3 1 5 1 7 2 4-1 8-5 6-3 1-7 0-6-4 1-2-2-6 2-9z"/><path stroke="#00f" stroke-width="2" d="M9 8h1M18 19h1"/></svg>
          <svg viewBox="0 0 28 28"><path stroke-width="1.300" d="M7 20l4-8 3 6 7-10"/><path fill="#444" stroke="none" d="M9 19h3v3H9zM10 10h3v3h-3zM19 7h3v3h-3z"/></svg>
        </div>
        <h3>Double Line<svg viewBox="0 0 16 16"><use href="#dz"/></svg></h3>
        <div class="h-[44px]">
          <svg viewBox="0 0 28 28"><path d="M7 18L18 7l3 3-11 11z"/><path fill="#00f" stroke="none" d="M8 20h2v2H8zM20 8h2v2h-2z"/></svg>
          <svg viewBox="0 0 28 28"><path d="M6 19l8-8 8 8M9 21l5-5 5 5"/><path stroke="#00f" stroke-width="2" d="M6 20h1M21 20h1M13 9h2"/></svg>
          <svg viewBox="0 0 28 28"><circle cx="14" cy="14" r="6.500" stroke-width="1.300"/><circle cx="14" cy="14" r="4"/><path fill="#00f" stroke="none" d="M13 13h2v2h-2z"/></svg>
          <svg viewBox="0 0 28 28" stroke-width="1.300"><path d="M8 11l4-3h8l2 4-3 7-8 1-4-4z"/><path stroke="#00f" stroke-width="1.500" d="M11 12h7v5h-7z"/></svg>
          <svg viewBox="0 0 28 28" stroke-width="1.500"><path d="M7.500 7.500h13v13h-13zM10.500 10.500h7v7h-7z"/></svg>
          <svg viewBox="0 0 28 28" stroke-width="1.500"><path d="M6 14l7-7 9 6-7 7zM10 14l4-3 4 3-3 3z"/><path stroke="#00f" d="M18 20l3-3v4"/></svg>
          <svg viewBox="0 0 28 28"><path d="M6 13l7-6M9 7l13 13M6 13l10 10M9 12l9 9"/></svg>
          <svg viewBox="0 0 28 28"><path d="M6 18L18 7M9 21L22 9"/><path stroke="#00f" stroke-width="1.500" d="M6 14l14 5"/></svg>
        </div>
        <h3>Multiline<svg viewBox="0 0 16 16"><use href="#dn"/></svg></h3>
        <h3>Dimension<svg viewBox="0 0 16 16"><use href="#dn"/></svg></h3>
      </div>
    </div>
    <!-- panel tabs -->
    <div class="h-[28px] flex shrink-0 pl-px [&>span]:h-[26px] [&>span]:flex [&>span]:items-center [&>span]:justify-center [&>span]:gap-[3px] [&>span]:border-r [&>span]:border-[#d8d8d8] [&_svg]:w-[16px] [&_svg]:h-[14px]">
      <span class="w-[48px] bg-white mt-px"><svg viewBox="0 0 16 14"><path fill="#fff" d="M1.500 1.500h13v11h-13z"/><path fill="#6aa0e8" stroke="none" d="M2 2h12v2H2z"/><path fill="#e00" stroke="none" d="M5 5h6v7H5z"/></svg>T...</span>
      <span class="w-[44px]"><svg viewBox="0 0 16 14"><path fill="#fff" d="M1.500 1.500h13v11h-13z"/><path fill="#6aa0e8" stroke="none" d="M2 2h12v2H2z"/><path stroke="#333" stroke-dasharray="2 1" d="M5 6l6 5M11 6l-6 5"/></svg>B...</span>
      <span class="w-[47px]"><svg viewBox="0 0 16 14"><path fill="#fff" d="M1.500 1.500h13v11h-13z"/><path fill="#6aa0e8" stroke="none" d="M2 2h12v2H2z"/><path fill="#000" stroke="none" d="M6 5v7l2-2 3 0z"/></svg>S...</span>
      <span class="w-[47px]"><svg viewBox="0 0 16 14"><path fill="#fff" d="M1.500 1.500h13v11h-13z"/><path fill="#6aa0e8" stroke="none" d="M2 2h12v2H2z"/><path fill="#0a8" stroke="none" d="M4 5h8v6H4z"/></svg>E...</span>
      <span class="w-[46px]"><svg viewBox="0 0 16 14"><path fill="#fff" d="M1.500 1.500h13v11h-13z"/><path fill="#6aa0e8" stroke="none" d="M2 2h12v2H2z"/><path stroke="#e00" d="M5 12V7"/><path stroke="#0a0" d="M8 12V6"/><path stroke="#00f" d="M11 12V8"/></svg>L...</span>
      <span class="w-[45px]"><svg viewBox="0 0 16 14"><path fill="#0a8a8a" d="M1.500 1.500h13v11h-13z"/><path stroke="#cff" stroke-dasharray="1 1" d="M4 7h8M4 10h8"/></svg>C...</span>
    </div>
    <!-- measurement info -->
    <div class="mt-[5px] h-[28px] pb-px bg-linear-to-b from-[#b8cbde] to-[#dfe8f1] flex items-center pl-[4px] border-t border-x border-[#555] shrink-0">
      <span class="text-[15px] text-[#222]">Measurement Info</span>
      <svg class="ml-auto w-[20px] h-[20px]" viewBox="0 0 20 20"><use href="#pin"/></svg>
      <svg class="ml-[4px] mr-px w-[15px] h-[15px] bg-[#d6dbe0] border border-white" viewBox="0 0 15 15"><path stroke="#fff" stroke-width="2" d="M3 3l9 9M12 3l-9 9"/></svg>
    </div>
    <div class="h-[33px] flex items-center pl-[5px] shrink-0">
      <span class="w-[23px] h-[21px] bg-[#f8f8f8] border-t border-l border-[#ccc] flex items-center justify-center"><svg class="w-[12px] h-[12px]" viewBox="0 0 12 12"><path d="M.5.5h11v11H.5zM2 3.500h8M2 6h8M2 8.500h8"/></svg></span>
      <svg class="ml-[5px] w-[14px] h-[14px]" viewBox="0 0 14 14"><path stroke="#bbb" stroke-width="2" d="M3 3l8 8M11 3l-8 8"/></svg>
    </div>
    <div class="ml-[4px] w-[278px] h-[247px] bg-white border-2 border-[#b8b8b8] border-t-[#aaa] flex justify-end shrink-0">
      <div class="w-[20px] h-full bg-[#f0f0f0] flex flex-col items-center justify-between py-[6px]">
        <svg class="w-[10px] h-[7px]" viewBox="0 0 10 7"><path stroke="#aaa" stroke-width="1.500" d="M1 6l4-4 4 4"/></svg>
        <svg class="w-[10px] h-[7px]" viewBox="0 0 10 7"><path stroke="#aaa" stroke-width="1.500" d="M1 1l4 4 4-4"/></svg>
      </div>
    </div>
  </div>

  <!-- right tools -->
  <div class="ml-px w-[31px] h-[467px] border-l border-b border-[#ccc] pt-[3px] pl-px shrink-0 flex flex-col [&>svg]:size-[28px] [&>svg]:shrink-0 [&>i]:h-[6px] [&>i]:flex [&>i]:items-center [&>i]:after:block [&>i]:after:w-full [&>i]:after:h-px [&>i]:after:bg-[#888]">
    <b class="h-0 border-t-2 border-dotted border-[#c4c4c4] mb-[4px]"></b>
    <svg viewBox="0 0 28 28" stroke="#999"><path fill="#ddd" d="M6.500 6.500h11v13h-11z"/><path d="M9.500 9.500h11v13h-11z"/></svg>
    <i></i>
    <svg viewBox="0 0 28 28"><path stroke="#f00" stroke-width="1.500" d="M6 16l7 7M14 16l-8 7M17 12l7-7M17 5l7 7"/><use href="#tri"/></svg>
    <svg viewBox="0 0 28 28"><path stroke="#777" stroke-width="3" d="M9 19l10-10"/><path fill="#00f" stroke="none" d="M4 24h8l-8-8z"/><path fill="#f00" stroke="none" d="M24 4h-8l8 8z"/><use href="#tri"/></svg>
    <i></i>
    <svg viewBox="0 0 28 28"><path fill="#fff" stroke-width="2" d="M5 5h8v8H5z"/><path stroke="#0a0" d="M13 6c5 0 8 2 8 7"/><path fill="#fff" stroke="#f00" stroke-width="2" d="M15 15h9v8h-9z"/><use href="#tri"/></svg>
    <svg viewBox="0 0 28 28" stroke="#bbb"><path d="M8 13h12v9H8zM12 13V8h7v5M11 17h6"/></svg>
    <i></i>
    <svg viewBox="0 0 28 28" stroke="#aaa"><path fill="#ddd" d="M6.500 6.500h11v11h-11z"/><path fill="#bbb" d="M11.500 11.500h11v11h-11z"/></svg>
    <i></i>
    <svg viewBox="0 0 28 28" stroke="#aaa"><path fill="#ddd" d="M5.500 7.500h18v14h-18z"/><path d="M5.500 12h18M5.500 16.500h18M11.500 7.500v14M17.500 7.500v14"/><use href="#tri"/></svg>
    <svg viewBox="0 0 28 28"><path stroke="#555" d="M5 11l5-6h14v13l-5 6H5zM5 11h14v13M19 11l5-6"/><path fill="#28d" stroke="#00f" stroke-dasharray="1 1" d="M8 15h11l-3 4H5z"/><use href="#tri"/></svg>
    <svg viewBox="0 0 28 28" stroke="#bbb"><circle cx="15" cy="12" r="7"/><path fill="#ddd" d="M7 10h11v12H7z"/><use href="#tri"/></svg>
    <svg viewBox="0 0 28 28"><path fill="#ff0" d="M6 11l6-6 4 4-6 6z"/><path fill="#777" stroke="none" d="M14 13l6-1-1 6z"/><path stroke="#00f" stroke-width="3" stroke-dasharray="2 6" d="M7 20h17M12 24h12"/><path stroke="#0c0" stroke-width="2" stroke-dasharray="2 6" d="M9 22h17"/><use href="#tri"/></svg>
    <svg viewBox="0 0 28 28" stroke="#aaa"><path fill="#ddd" d="M8 9c0-4 12-4 12 0v10c0 4-12 4-12 0z"/><path d="M8 13h12M8 16h12"/></svg>
    <svg viewBox="0 0 28 28"><path fill="#444" stroke="none" d="M5 4h9v9H5z"/><path stroke="#fff" stroke-dasharray="1 1" d="M5 8h9M9 4v9"/><path stroke="#00f" stroke-width="2" d="M16 6l6 0M19 6v5"/><path fill="#fff" d="M13 14h10v10H13z"/><path d="M13 24l10-10"/><use href="#tri"/></svg>
    <i></i>
    <svg viewBox="0 0 28 28"><circle cx="14" cy="14" r="9" stroke="#9a0" stroke-width="2" fill="#fff"/><path fill="#00007f" stroke="none" d="M14 7l3 4h-2v2h2v-2l4 3-4 3v-2h-2v2h2l-3 4-3-4h2v-2h-2v2l-4-3 4-3v2h2v-2h-2z"/><use href="#tri"/></svg>
    <svg viewBox="0 0 28 28"><path stroke="#777" d="M8 19l14-12"/><path fill="#222" stroke="none" d="M4 6h9v4H4z"/><path stroke="#00f" fill="#fff" d="M5.500 17.500h4v4h-4zM20.500 5.500h4v4h-4z"/><use href="#tri"/></svg>
    <i></i>
    <svg viewBox="0 0 28 28" stroke="#aaa"><path d="M7.500 7.500h14v14h-14z"/><path fill="#aaa" d="M5 5h4v4H5zM19 5h4v4h-4zM5 19h4v4H5zM19 19h4v4h-4zM12 12h4v4h-4z"/></svg>
  </div>
</div>

<!-- property bar -->
<div class="h-[50px] border-t border-[#fafafa] border-b-2 border-b-[#aaa] shrink-0 flex items-start [&>i]:self-center [&>i]:w-px [&>i]:h-[42px] [&>i]:bg-[#999] [&>section]:pt-[4px] [&>section]:h-full [&>section]:flex [&>section]:flex-col [&>section]:gap-[4px] [&_p]:h-[23px] [&_p]:flex [&_p]:items-center [&_p]:pl-[5px] [&_p]:text-[#777] [&_p]:border-t-2 [&_p]:border-l [&_p]:border-[#aaa] [&_p]:whitespace-nowrap [&_label]:h-[15px] [&_label]:flex [&_label]:items-center [&_label]:whitespace-nowrap [&>svg]:self-center [&>svg]:w-[22px] [&>svg]:h-[22px] [&>svg]:shrink-0">
  <u class="self-center ml-[3px] mr-[-5px] h-[42px] border-l-2 border-dotted border-[#ccc]"></u>
  <svg class="ml-[10px]" viewBox="0 0 22 22"><path stroke="#bbb" stroke-width="2" d="M6 6l10 10M16 6L6 16"/></svg>
  <svg viewBox="0 0 22 22" stroke="#aaa"><path fill="#ddd" d="M5.500 5.500h11v11h-11z"/><path d="M5.500 9h11M5.500 12.500h11M9 5.500v11M13 5.500v11"/></svg>
  <i class="ml-[2px]"></i>
  <section class="ml-[6px] w-[95px]"><label>Scale X</label><p>1</p></section>
  <svg class="ml-px !w-[19px] !h-[25px] !self-end mb-px" viewBox="0 0 19 25"><path fill="#f2f2f2" stroke="#ddd" d="M.5.5h18v11H.5zM.5 13.500h18v11H.5z"/><path fill="#888" stroke="none" d="M9.500 3l4 5h-8zM9.500 22l4-5h-8z"/></svg>
  <section class="ml-[5px] w-[97px]"><label>Scale Y</label><p>1</p></section>
  <svg class="!w-[19px] !h-[25px] !self-end mb-px" viewBox="0 0 19 25"><path fill="#f2f2f2" stroke="#ddd" d="M.5.5h18v11H.5zM.5 13.500h18v11H.5z"/><path fill="#888" stroke="none" d="M9.500 3l4 5h-8zM9.500 22l4-5h-8z"/></svg>
  <section class="ml-[5px] w-[117px]"><label>Size X</label><p>0 mm</p></section>
  <section class="ml-[5px] w-[116px]"><label>Size Y</label><p>0 mm</p></section>
  <section class="ml-[4px] w-[117px]"><label>Pos X</label><p>0 mm</p></section>
  <section class="ml-[5px] w-[116px]"><label>Pos Y</label><p>0 mm</p></section>
  <section class="ml-[5px] w-[116px]"><label>Delta X</label><p>0 mm</p></section>
  <section class="ml-[4px] w-[117px]"><label>Delta Y</label><p>0 mm</p></section>
  <section class="ml-[5px] w-[95px]"><label>Rot</label><p>0</p></section>
  <svg class="ml-[2px] !w-[18px] !h-[25px] !self-end mb-px" viewBox="0 0 19 25"><path fill="#f2f2f2" stroke="#ddd" d="M.5.5h18v11H.5zM.5 13.500h18v11H.5z"/><path fill="#888" stroke="none" d="M9.500 3l4 5h-8zM9.500 22l4-5h-8z"/></svg>
  <section class="ml-[6px] w-[117px]"><label>Delta Distance</label><p>0 mm</p></section>
  <section class="ml-[3px] w-[96px]"><label>Delta Angle</label><p>0</p></section>
  <svg class="ml-px !w-[19px] !h-[25px] !self-end mb-px" viewBox="0 0 19 25"><path fill="#f2f2f2" stroke="#ddd" d="M.5.5h18v11H.5zM.5 13.500h18v11H.5z"/><path fill="#888" stroke="none" d="M9.500 3l4 5h-8zM9.500 22l4-5h-8z"/></svg>
  <i class="ml-[6px]"></i>
  <svg class="ml-px" viewBox="0 0 22 22"><path fill="#fff" d="M5 11h6v8H5z"/><path fill="#fff" d="M9 6l8-2v6l-6 2z"/></svg>
  <svg class="ml-px bg-[#b8d8f5] border border-[#8fc1ea]" viewBox="0 0 22 22"><path stroke="#a33" d="M6 16L16 5"/><path fill="#fff" d="M10 11h6v8h-6z"/><path fill="#333" stroke="none" d="M5 5h4v4H5z"/></svg>
  <svg viewBox="0 0 22 22"><path d="M6 16c4 0 7-3 7-9"/><path stroke="#00f" stroke-width="2" d="M12 6l3 1M5 15l2 2"/><path stroke="#333" d="M15 9v9"/></svg>
  <i class="ml-[3px] mr-[3px]"></i>
  <svg class="bg-[#b8d8f5] border border-[#8fc1ea]" viewBox="0 0 22 22"><path fill="#0c6" stroke-width="1.500" d="M4 4h14v14H4z"/><path fill="#0a6a70" stroke="none" d="M5 5h12L5 17z"/></svg>
  <svg viewBox="0 0 22 22"><path fill="#0a6a70" d="M4 4h7l6 8-3 6H4z"/><path fill="#fff" d="M12 4h5v5z"/></svg>
  <svg viewBox="0 0 22 22"><path fill="#0c0" d="M4 4h6l8 14H4z"/><path fill="#fff" d="M11 4h5v5z"/></svg>
  <svg viewBox="0 0 22 22"><path fill="#fff" d="M5 5h12v12H5z"/><path fill="#0a8" stroke="none" d="M7 7h4v4H7zM11 12h5v4h-5z"/></svg>
  <i class="ml-[2px] mr-[3px]"></i>
  <svg viewBox="0 0 22 22"><path fill="#0a8" d="M5 6h8v8H5z"/><path d="M11 11l3 8 2-3 3 1z" fill="#fff"/></svg>
  <svg viewBox="0 0 22 22"><path stroke="#f00" stroke-width="2" d="M6 4l5 7"/><path stroke="#999" d="M11 11l1 8"/><path stroke="#00f" stroke-width="2" d="M10 19h5"/></svg>
  <svg viewBox="0 0 22 22"><path stroke="#f00" stroke-width="1.500" d="M6 18L11 5l5 13z"/><path fill="#222" stroke="none" d="M9 12h4v4H9z"/></svg>
  <svg viewBox="0 0 22 22" stroke="#aaa"><path d="M6 11h10v8H6zM9 11V6h4v5"/></svg>
  <svg viewBox="0 0 22 22"><path stroke="#00007f" stroke-width="1.500" d="M5 5h12v13H5z"/><path stroke="#f00" d="M5 18L18 4"/></svg>
  <svg viewBox="0 0 22 22" stroke="#aaa"><path d="M6.500 6.500h9v9h-9z"/><path fill="#aaa" d="M4 4h4v4H4zM14 4h4v4h-4zM4 14h4v4H4zM14 14h4v4h-4z"/></svg>
  <svg viewBox="0 0 22 22" stroke="#aaa"><path d="M7 8h9v9H7zM13 5h5v4"/><path fill="#aaa" d="M5 15h4v4H5z"/></svg>
  <svg viewBox="0 0 22 22" stroke="#aaa"><path d="M6.500 6.500h9v9h-9z"/><path fill="#aaa" d="M4 14h4v4H4zM14 4h4v4h-4z"/></svg>
  <svg viewBox="0 0 22 22"><path stroke="#00007f" stroke-width="1.500" d="M6 5h10v13H6z"/><path stroke="#f00" d="M6 18L16 5"/></svg>
</div>

<!-- status bar -->
<footer class="h-[31px] pb-[3px] flex items-center shrink-0 pl-[8px] text-[14px]">
  <span>Select object(s)</span>
  <div class="ml-auto w-[582px] flex items-center [&>b]:font-normal [&>b]:h-[23px] [&>b]:bg-white [&>b]:border [&>b]:border-black [&>b]:flex [&>b]:items-center [&>b]:pl-[5px] [&>b]:text-[13.500px] [&>em]:w-[12px] [&>em]:h-[23px] [&>em]:not-italic [&>em]:flex [&>em]:flex-col [&>em]:justify-between [&>em]:text-[10px] [&>em]:text-[#444] [&>em]:items-center">
    <span class="w-[46px]">SNAP</span>
    <span class="w-[46px]">GEO</span>
    <em><i class="w-[8px] h-[9px] border-2 border-[#222] bg-[#ddd]"></i>X</em>
    <b class="w-[94px]">5800,417811</b>
    <em class="ml-[11px]"><i class="w-[8px] h-[9px] border-2 border-[#222] bg-[#ddd]"></i>Y</em>
    <b class="w-[95px]">1352,639527</b>
    <em class="ml-[10px]"><i class="w-[8px] h-[9px] border-2 border-[#666] bg-[#ddd]"></i>Z</em>
    <b class="w-[94px] text-[#777]">0 mm</b>
    <span class="ml-[10px] w-[71px] self-start">15%</span>
    <span class="self-start">18:58</span>
  </div>
</footer>
</body>
</html>
